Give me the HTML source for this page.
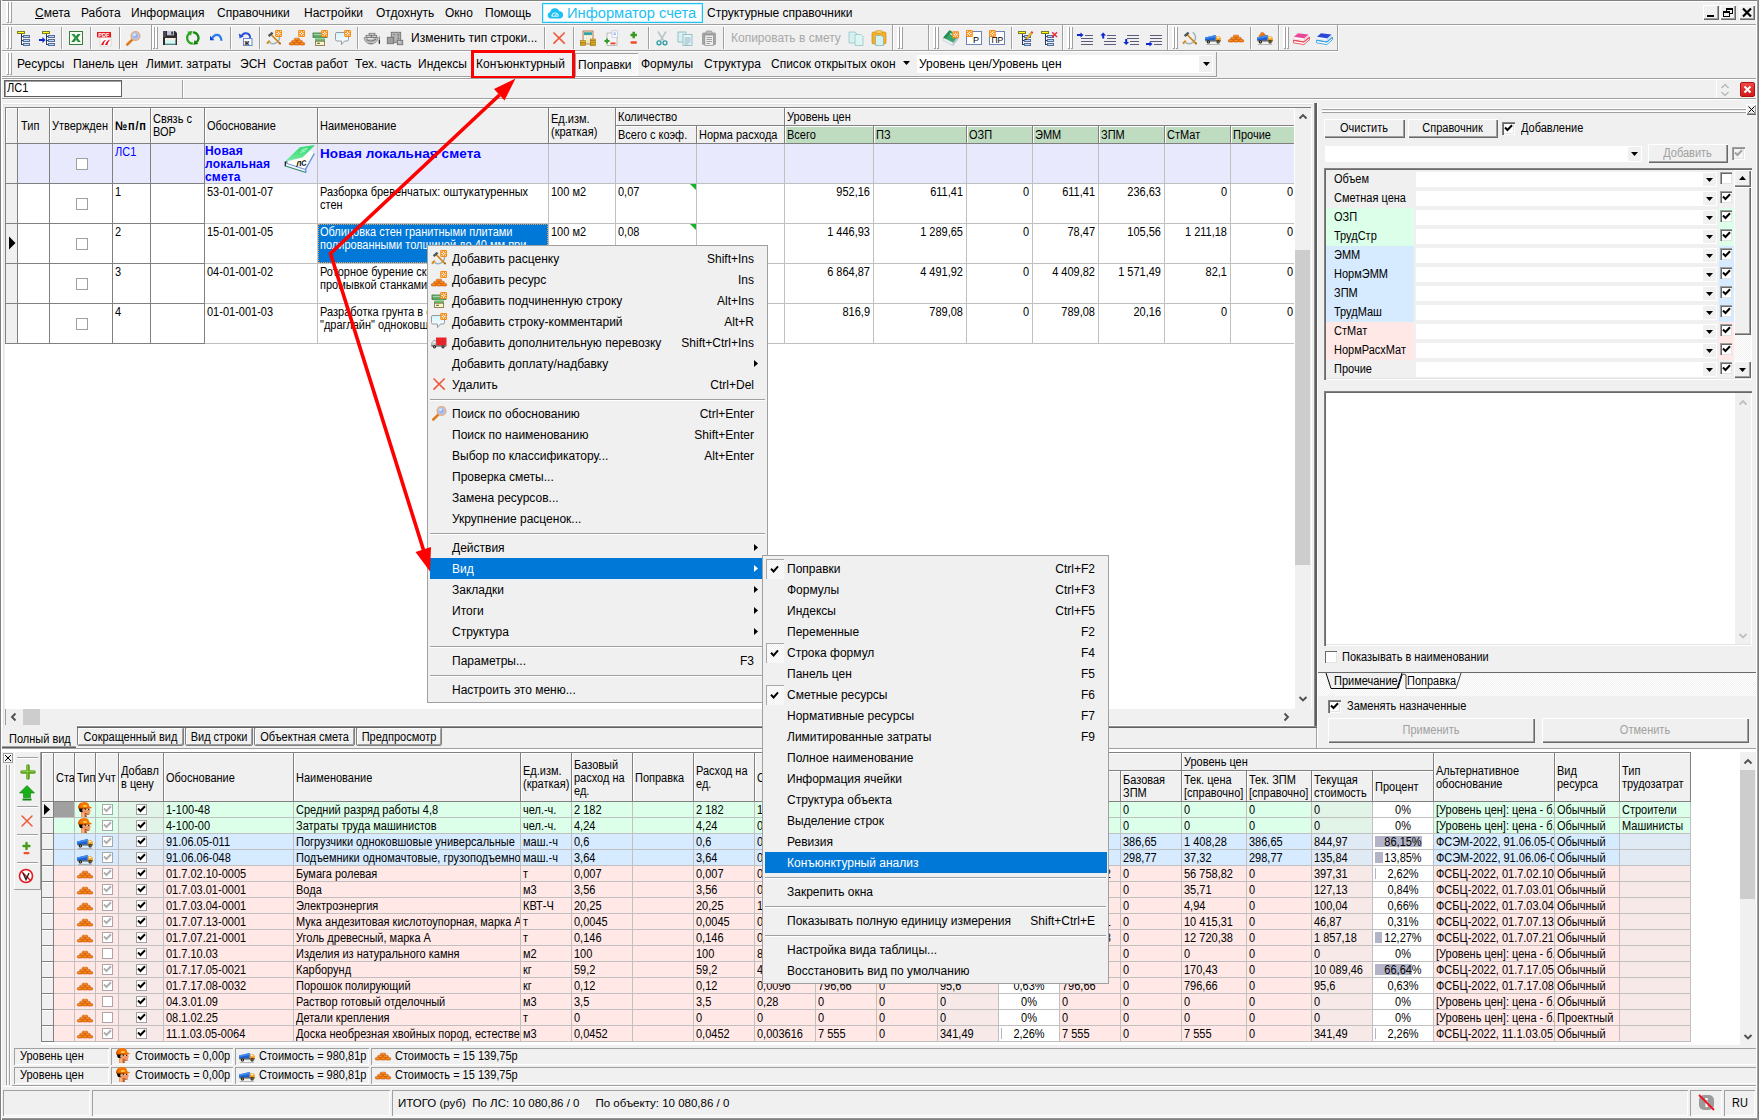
<!DOCTYPE html>
<html><head><meta charset="utf-8"><title>Smeta</title>
<style>
*{box-sizing:border-box}
html,body{margin:0;padding:0}
body{width:1759px;height:1120px;overflow:hidden;background:#f0f0f0;font-family:"Liberation Sans",sans-serif;position:relative;color:#000}
#r div,#r span,#r svg{position:absolute}
#r svg{overflow:visible}
#r{position:absolute;left:0;top:0;width:1759px;height:1120px;overflow:hidden}
.t{font-size:11px;line-height:13px;white-space:nowrap;transform:scaleY(1.11);transform-origin:0 79%}
.nt{transform:none}
.tw{font-size:11px;line-height:13px;white-space:normal}
.m{font-size:12px;line-height:15px;white-space:nowrap}
.g{color:#a0a0a0}
.b{font-weight:bold}
.bl{color:#0000ff}
.w{color:#fff}
.rs{box-shadow:inset 1px 1px 0 #fff,inset -1px -1px 0 #696969,inset -2px -2px 0 #a0a0a0;background:#f0f0f0}
.sk{box-shadow:inset 1px 1px 0 #a0a0a0,inset -1px -1px 0 #fff}
.sk2{box-shadow:inset 1px 1px 0 #828282,inset 2px 2px 0 #696969,inset -1px -1px 0 #fff,inset -2px -2px 0 #e3e3e3}
.cb{width:13px;height:13px;background:#fff;box-shadow:inset 1px 1px 0 #828282,inset 2px 2px 0 #696969,inset -1px -1px 0 #fff,inset -2px -2px 0 #e3e3e3}
.cg{width:12px;height:12px;background:#fff;border:1px solid #a0a0a0}
.hat{background-image:repeating-conic-gradient(#fff 0 25%,#f0f0f0 0 50%);background-size:2px 2px}
</style></head><body><div id="r">
<svg width="0" height="0" style="left:0;top:0"><defs><g id="tree"><g shape-rendering="crispEdges"><rect x="1" y="1" width="8" height="3" fill="#7c7c2a"/><rect x="2" y="2" width="6" height="1" fill="#ffff00"/><rect x="5" y="4" width="1" height="11" fill="#283a64"/><rect x="6" y="6" width="1" height="1" fill="#283a64"/><rect x="6" y="10" width="1" height="1" fill="#283a64"/><rect x="6" y="14" width="1" height="1" fill="#283a64"/><g fill="#5a6c9c"><rect x="7" y="5" width="7" height="3"/><rect x="7" y="9" width="7" height="3"/><rect x="7" y="13" width="7" height="3"/></g><g fill="#b4dcff"><rect x="8" y="6" width="5" height="1"/><rect x="8" y="10" width="5" height="1"/><rect x="8" y="14" width="5" height="1"/></g></g></g><g id="tree2"><g transform="translate(2,0)"><g shape-rendering="crispEdges"><rect x="1" y="1" width="8" height="3" fill="#7c7c2a"/><rect x="2" y="2" width="6" height="1" fill="#ffff00"/><rect x="5" y="4" width="1" height="11" fill="#283a64"/><rect x="6" y="6" width="1" height="1" fill="#283a64"/><rect x="6" y="10" width="1" height="1" fill="#283a64"/><rect x="6" y="14" width="1" height="1" fill="#283a64"/><g fill="#5a6c9c"><rect x="7" y="5" width="7" height="3"/><rect x="7" y="9" width="7" height="3"/><rect x="7" y="13" width="7" height="3"/></g><g fill="#b4dcff"><rect x="8" y="6" width="5" height="1"/><rect x="8" y="10" width="5" height="1"/><rect x="8" y="14" width="5" height="1"/></g></g></g><path d="M0 9h3.500V7L6.500 10 3.500 13v-2H0z" fill="#0a28d0"/></g><g id="excel"><rect x="1.500" y="1.500" width="13" height="13" fill="#f6fbf4" stroke="#3a7a3a" stroke-width="1"/><path d="M3.300 4h3L8 6.300 9.700 4h3L9.600 8l3.100 4h-3L8 9.700 6.300 12h-3L6.400 8z" fill="#1e8a34"/><path d="M4.500 4.600l5.500 6.800" stroke="#7ad08a" stroke-width=".6"/></g><g id="pdf"><path d="M3 4h11v12H3z" fill="#fff" stroke="#bbb" stroke-width=".5"/><rect x="0" y="2" width="14" height="5.4" fill="#e8161e"/><text x="1.2" y="6.8" font-size="5.6" font-weight="bold" fill="#fff" font-family="Liberation Sans">PDF</text><path d="M4 15c1-3 3-5 5-5-1.5 1.5-2.2 3-2.5 5zM8 15c1-3 3-5.5 5.5-5.5-1.8 1.5-2.6 3.4-3 5.5z" fill="#e8161e"/></g><g id="mag"><path d="M7.600 9.400L2.300 14.500" stroke="#e07a20" stroke-width="2.600" stroke-linecap="round"/><circle cx="10.500" cy="6" r="4.400" fill="#b4c8f0" stroke="#e8a878" stroke-width="1.300"/><circle cx="10.500" cy="6" r="2.500" fill="#9cb4e8"/><circle cx="9.500" cy="4.800" r="1.300" fill="#e4ecff"/></g><g id="save"><path d="M1 1h12l2 2v12H1z" fill="#2c2c2c"/><path d="M1 1h3v6H1z" fill="#4a4a4a"/><rect x="5" y="1" width="7" height="4.300" fill="#c4c4e0"/><rect x="9.300" y="1.600" width="1.800" height="3" fill="#3a3a3a"/><rect x="3" y="8" width="10.500" height="6.300" fill="#d8f4f0"/><rect x="3" y="8" width="10.500" height="1.600" fill="#ffeedd"/><rect x="3" y="13.500" width="10.500" height=".8" fill="#5ababa"/></g><g id="refresh"><path d="M7.800 13.500A5.600 5.600 0 0 1 4.200 3.600" fill="none" stroke="#2aa41c" stroke-width="2.300"/><path d="M7.300 1L5.900 5.800 2.300 1.700z" fill="#2aa41c"/><path d="M7.800 2.300A5.600 5.600 0 0 1 11.400 12.200" fill="none" stroke="#168a12" stroke-width="2.300"/><path d="M8.300 14.800L9.700 10 13.300 14.100z" fill="#0c7a0c"/></g><g id="undo"><path d="M4.300 8.200C6.300 4 11 3.600 12.700 7.500L13.600 10.800" fill="none" stroke="#2a7cf4" stroke-width="2.200"/><path d="M2 5.800V10.300H6.400z" fill="#0a44d8"/></g><g id="redo"><path d="M3.5 6.5C5 2.5 10 2 12 6v3" fill="none" stroke="#2a50d8" stroke-width="1.8"/><path d="M.8 3.6l.8 5 4.2-2.4z" fill="#2a50d8"/><rect x="5.5" y="8.5" width="8.5" height="7" fill="#fff" stroke="#6a84d0"/><text x="6.6" y="14.6" font-size="6.5" font-weight="bold" fill="#000" font-family="Liberation Sans">ж</text></g><g id="hammerb"><path d="M3.800 12.600A6.200 6.200 0 0 0 10.800 2.300" fill="none" stroke="#9ab4b8" stroke-width="1.500"/><path d="M.9 13.600L3.800 10.800" stroke="#d08418" stroke-width="1.900"/><path d="M5 4.500L13.800 13.300" stroke="#d08418" stroke-width="1.700"/><path d="M2.600 6.200L6.600 2.600" stroke="#4a5858" stroke-width="2.400"/><circle cx="14" cy="13.500" r="1" fill="#a05a10"/><rect x="9.200" y="0" width="6.800" height="7" rx="1.200" fill="#f58a10"/><path d="M12.6 .7l.75 2.050 2.050 .75-2.050 .75-.75 2.050-.75-2.050-2.050-.75 2.050-.75z" fill="#fff"/><g fill="#fff"><rect x="10.3" y="1.200" width=".9" height=".9"/><rect x="14.0" y="1.200" width=".9" height=".9"/><rect x="10.3" y="4.900" width=".9" height=".9"/><rect x="14.0" y="4.900" width=".9" height=".9"/></g><circle cx="12.6" cy="3.500" r=".75" fill="#f58a10"/></g><g id="hammer"><path d="M3.800 12.600A6.200 6.200 0 0 0 10.800 2.300" fill="none" stroke="#9ab4b8" stroke-width="1.500"/><path d="M.9 13.600L3.800 10.800" stroke="#d08418" stroke-width="1.900"/><path d="M5 4.500L13.800 13.300" stroke="#d08418" stroke-width="1.700"/><path d="M2.600 6.200L6.600 2.600" stroke="#4a5858" stroke-width="2.400"/><circle cx="14" cy="13.500" r="1" fill="#a05a10"/></g><g id="bricksb"><g transform="translate(0,3)"><g fill="#f57c0c" stroke="#c04c04" stroke-width=".55"><rect x="5.300" y="5.200" width="5.400" height="2.300" rx="1"/><rect x="2.600" y="7.400" width="5.400" height="2.300" rx="1"/><rect x="8" y="7.400" width="5.400" height="2.300" rx="1"/><rect x=".3" y="9.600" width="5.200" height="2.400" rx="1"/><rect x="5.400" y="9.600" width="5.200" height="2.400" rx="1"/><rect x="10.500" y="9.600" width="5.200" height="2.400" rx="1"/></g><path d="M6.300 5.900h3M3.600 8.100h3M9 8.100h3M1.300 10.300h2.800M6.400 10.300h2.800M11.500 10.300h2.800" stroke="#ffa848" stroke-width=".6"/></g><rect x="9.200" y="0" width="6.800" height="7" rx="1.200" fill="#f58a10"/><path d="M12.6 .7l.75 2.050 2.050 .75-2.050 .75-.75 2.050-.75-2.050-2.050-.75 2.050-.75z" fill="#fff"/><g fill="#fff"><rect x="10.3" y="1.200" width=".9" height=".9"/><rect x="14.0" y="1.200" width=".9" height=".9"/><rect x="10.3" y="4.900" width=".9" height=".9"/><rect x="14.0" y="4.900" width=".9" height=".9"/></g><circle cx="12.6" cy="3.500" r=".75" fill="#f58a10"/></g><g id="bricks"><g fill="#f57c0c" stroke="#c04c04" stroke-width=".55"><rect x="5.300" y="5.200" width="5.400" height="2.300" rx="1"/><rect x="2.600" y="7.400" width="5.400" height="2.300" rx="1"/><rect x="8" y="7.400" width="5.400" height="2.300" rx="1"/><rect x=".3" y="9.600" width="5.200" height="2.400" rx="1"/><rect x="5.400" y="9.600" width="5.200" height="2.400" rx="1"/><rect x="10.500" y="9.600" width="5.200" height="2.400" rx="1"/></g><path d="M6.300 5.900h3M3.600 8.100h3M9 8.100h3M1.300 10.300h2.800M6.400 10.300h2.800M11.500 10.300h2.800" stroke="#ffa848" stroke-width=".6"/></g><g id="boxb"><rect x="1" y="3" width="14" height="4.500" fill="#5fa462" stroke="#3c7c40" stroke-width=".8"/><rect x="1.800" y="3.800" width="12.400" height="1.400" fill="#a4d0a4"/><rect x="3" y="7.500" width="10" height="3.700" fill="#6cb46e"/><rect x="3" y="8" width="10" height="1.200" fill="#9cd09c"/><rect x="3.400" y="11.200" width="9.200" height="4.300" fill="#fbf4cc" stroke="#7a6a36" stroke-width=".8"/><rect x="5" y="12.800" width="3" height="1" rx=".5" fill="#245c24"/><rect x="9.200" y="0" width="6.800" height="7" rx="1.200" fill="#f58a10"/><path d="M12.6 .7l.75 2.050 2.050 .75-2.050 .75-.75 2.050-.75-2.050-2.050-.75 2.050-.75z" fill="#fff"/><g fill="#fff"><rect x="10.3" y="1.200" width=".9" height=".9"/><rect x="14.0" y="1.200" width=".9" height=".9"/><rect x="10.3" y="4.900" width=".9" height=".9"/><rect x="14.0" y="4.900" width=".9" height=".9"/></g><circle cx="12.6" cy="3.500" r=".75" fill="#f58a10"/></g><g id="speechb"><defs><linearGradient id="sg" x1="0" y1="0" x2="0" y2="1"><stop offset="0" stop-color="#d4f4ff"/><stop offset="1" stop-color="#fff"/></linearGradient></defs><path d="M2 2.500h10a1.500 1.500 0 0 1 1.500 1.500v5.500a1.500 1.500 0 0 1-1.500 1.500H9.500l-3 3.500V11H2A1.500 1.500 0 0 1 .5 9.500V4A1.500 1.500 0 0 1 2 2.500z" fill="url(#sg)" stroke="#8c9096" stroke-width=".9"/><rect x="9.200" y="0" width="6.800" height="7" rx="1.200" fill="#f58a10"/><path d="M12.6 .7l.75 2.050 2.050 .75-2.050 .75-.75 2.050-.75-2.050-2.050-.75 2.050-.75z" fill="#fff"/><g fill="#fff"><rect x="10.3" y="1.200" width=".9" height=".9"/><rect x="14.0" y="1.200" width=".9" height=".9"/><rect x="10.3" y="4.900" width=".9" height=".9"/><rect x="14.0" y="4.900" width=".9" height=".9"/></g><circle cx="12.6" cy="3.500" r=".75" fill="#f58a10"/></g><g id="gray1"><path d="M1.100 7.600h13.900c0 3.600-3 6.200-7 6.200s-6.900-2.600-6.900-6.200z" fill="#c2c2c2" stroke="#808080" stroke-width=".7"/><path d="M3.500 9.500c2 2 7 2 9.500-.5" fill="none" stroke="#7c7c7c" stroke-width="1.100"/><path d="M5 8.300h5" stroke="#f4f4f4" stroke-width="1"/><g fill="#b8b8b8" stroke="#727272" stroke-width=".8"><rect x="6.100" y="3.300" width="5.800" height="2"/><rect x="3.100" y="5.300" width="5.300" height="2.200"/><rect x="8.400" y="5.300" width="5.300" height="2.200"/></g><path d="M7.200 4.300h3.500M4.200 6.400h3M9.500 6.400h3" stroke="#e8e8e8" stroke-width=".7"/><rect x="15.800" y="6.200" width="1.200" height="7.600" rx=".6" fill="#8a8a8a"/><rect x="15.800" y="10" width="1.200" height="3.800" rx=".6" fill="#2c2c2c"/><rect x="5.500" y="13.200" width="4.500" height="1" fill="#7c7c7c"/></g><g id="gray2"><rect x="5.300" y="2.300" width="9.400" height="10" fill="#b4b4b4" stroke="#727272" stroke-width=".9"/><path d="M7.200 4.600h2M11 4.600h2.500M12.300 4.600v4M11 8.800h2.600" stroke="#7a7a7a" stroke-width=".8"/><rect x="1.300" y="7.300" width="6.400" height="6.400" fill="#b0b0b0" stroke="#6e6e6e" stroke-width=".9"/><path d="M2.800 8v5M4.500 8v5M6.200 8v5" stroke="#8a8a8a" stroke-width=".8"/><rect x="11.300" y="10.300" width="5.400" height="4.400" fill="#b8b8b8" stroke="#6e6e6e" stroke-width=".9"/><rect x="12.200" y="11.200" width="1.200" height=".9" fill="#fff"/></g><g id="redx"><path d="M3 3l10.200 10.200M13.200 3L3 13.200" stroke="#f05a3c" stroke-width="1.700" stroke-linecap="round"/></g><g id="calc"><rect x="3" y="1" width="10" height="13" fill="#f0e4c0" stroke="#a86a4a" stroke-width=".8"/><rect x="4" y="2.300" width="8" height="2.600" fill="#28a0a8"/><g fill="#fff"><rect x="4.300" y="6" width="1.800" height="1.500"/><rect x="7" y="6" width="1.800" height="1.500"/><rect x="9.700" y="6" width="1.800" height="1.500"/><rect x="4.300" y="8.500" width="1.800" height="1.500"/><rect x="7" y="8.500" width="1.800" height="1.500"/><rect x="9.700" y="8.500" width="1.800" height="1.500"/></g><g fill="#e8b820" stroke="#8a6a10" stroke-width=".5"><rect x=".5" y="10.500" width="5" height="1.800"/><rect x=".5" y="12.300" width="5" height="1.800"/><rect x=".5" y="14" width="5" height="1.700"/><rect x="10.500" y="9" width="5" height="1.800"/><rect x="10.500" y="10.800" width="5" height="1.800"/><rect x="10.500" y="12.500" width="5" height="1.800"/><rect x="10.500" y="14.200" width="5" height="1.600"/></g></g><g id="docpm"><path d="M4 3h7l3 3v9.500H4z" fill="#f4f4f4" stroke="#b0b0b0" stroke-width=".8"/><rect x="9" y=".8" width="5.500" height="6.500" fill="#f8fbff" stroke="#b8c4d8" stroke-width=".7"/><path d="M10.500 3h2.500M10.500 4.500h2.500" stroke="#6a90e0" stroke-width=".7"/><path d="M1.500 11h5M4 8.500v5" stroke="#2e9a2e" stroke-width="1.800"/><rect x="7.500" y="12.500" width="5" height="1.800" fill="#e8402a"/></g><g id="plusminus"><path d="M5.500 5h6.400M8.700 1.800v6.400" stroke="#3a9a1e" stroke-width="2.500"/><rect x="5.500" y="11.300" width="6.400" height="2.400" rx="1" fill="#ee4a2a"/></g><g id="scis"><path d="M4 1.500l5.500 9M12 1.500L6.500 10.500" stroke="#b8c4c8" stroke-width="1.500"/><circle cx="5" cy="12.800" r="2" fill="none" stroke="#2a98a0" stroke-width="1.300"/><circle cx="11" cy="12.800" r="2" fill="none" stroke="#2a98a0" stroke-width="1.300"/></g><g id="copyg"><rect x="1" y="2" width="8" height="10" fill="#d8f0f4" stroke="#8ab4bc" stroke-width=".8"/><rect x="6" y="4.500" width="9" height="11" fill="#e2f6f8" stroke="#8ab4bc" stroke-width=".8"/><path d="M7.500 8h6M7.500 10h6M7.500 12h6M7.500 14h4" stroke="#7aa4ac" stroke-width=".8"/></g><g id="pasteg"><rect x="1" y="2.500" width="14" height="12.500" rx="1.500" fill="#a4a4a4"/><rect x="5" y="1" width="6" height="3" rx="1" fill="#bcbcbc" stroke="#8a8a8a" stroke-width=".6"/><rect x="3.800" y="5" width="8.800" height="10.500" fill="#ececec" stroke="#8a8a8a" stroke-width=".7"/><path d="M5.500 7.500h5.500M5.500 9.500h5.500M5.500 11.500h5.500M5.500 13.500h3.500" stroke="#8a8a8a" stroke-width=".8"/></g><g id="copy2"><path d="M1 2h6l2 2v9H1z" fill="#d4f0f0" stroke="#98c4c8" stroke-width=".8"/><path d="M7 4.500h6l2 2v9H7z" fill="#dcf4f4" stroke="#98c4c8" stroke-width=".8"/></g><g id="paste2"><rect x="1" y="2" width="14" height="12" rx="1.500" fill="#f4b028" stroke="#d08a10" stroke-width=".7"/><rect x="5" y=".6" width="6" height="2.800" rx="1" fill="#f8d060" stroke="#c08010" stroke-width=".5"/><path d="M4.500 5.500h6l2 2v8h-8z" fill="#d4f0f0" stroke="#88b4b8" stroke-width=".8"/></g><g id="gbook"><path d="M.3 7.500L10 12.500V15.700L.3 10.300z" fill="#eef1f4" stroke="#aab4c0" stroke-width=".5"/><path d="M10 12.500L15.700 5.800V8.800L10 15.700z" fill="#b8c2d0"/><path d="M6.500 .3L15.700 5.800 10 12.500 .3 7.500z" fill="#3aa86c"/><path d="M6.500 .3L9 1.800 2.800 8.800 .3 7.500z" fill="#2c8c58"/><path d="M7 3.500l3 1.700" stroke="#d8f4e4" stroke-width="1.100"/><g transform="translate(0,1.200)"><rect x="9.200" y="0" width="6.800" height="7" rx="1.200" fill="#f58a10"/><path d="M12.6 .7l.75 2.050 2.050 .75-2.050 .75-.75 2.050-.75-2.050-2.050-.75 2.050-.75z" fill="#fff"/><g fill="#fff"><rect x="10.3" y="1.200" width=".9" height=".9"/><rect x="14.0" y="1.200" width=".9" height=".9"/><rect x="10.3" y="4.900" width=".9" height=".9"/><rect x="14.0" y="4.900" width=".9" height=".9"/></g><circle cx="12.6" cy="3.500" r=".75" fill="#f58a10"/></g></g><g id="picon"><rect x=".5" y="1.500" width="15" height="13" fill="#fff" stroke="#6a84b8" stroke-width="1"/><text x="7" y="13" font-size="9" fill="#000" font-family="Liberation Sans">Р</text><rect x="0" y="0" width="6.800" height="7" rx="1.200" fill="#f58a10"/><path d="M3.4 .7l.75 2.050 2.050 .75-2.050 .75-.75 2.050-.75-2.050-2.050-.75 2.050-.75z" fill="#fff"/><g fill="#fff"><rect x="1.1" y="1.200" width=".9" height=".9"/><rect x="4.8" y="1.200" width=".9" height=".9"/><rect x="1.1" y="4.900" width=".9" height=".9"/><rect x="4.8" y="4.900" width=".9" height=".9"/></g><circle cx="3.4" cy="3.500" r=".75" fill="#f58a10"/></g><g id="pricon"><rect x=".5" y="1.500" width="15" height="13" fill="#fff" stroke="#6a84b8" stroke-width="1"/><text x="2.600" y="13" font-size="8.500" fill="#000" font-family="Liberation Sans" letter-spacing="-.3">ПР</text><rect x="0" y="0" width="6.800" height="7" rx="1.200" fill="#f58a10"/><path d="M3.4 .7l.75 2.050 2.050 .75-2.050 .75-.75 2.050-.75-2.050-2.050-.75 2.050-.75z" fill="#fff"/><g fill="#fff"><rect x="1.1" y="1.200" width=".9" height=".9"/><rect x="4.8" y="1.200" width=".9" height=".9"/><rect x="1.1" y="4.900" width=".9" height=".9"/><rect x="4.8" y="4.900" width=".9" height=".9"/></g><circle cx="3.4" cy="3.500" r=".75" fill="#f58a10"/></g><g id="treeed"><g shape-rendering="crispEdges"><rect x="1" y="1" width="8" height="3" fill="#7c7c2a"/><rect x="2" y="2" width="6" height="1" fill="#ffff00"/><rect x="5" y="4" width="1" height="11" fill="#283a64"/><rect x="6" y="6" width="1" height="1" fill="#283a64"/><rect x="6" y="10" width="1" height="1" fill="#283a64"/><rect x="6" y="14" width="1" height="1" fill="#283a64"/><g fill="#5a6c9c"><rect x="7" y="5" width="7" height="3"/><rect x="7" y="9" width="7" height="3"/><rect x="7" y="13" width="7" height="3"/></g><g fill="#b4dcff"><rect x="8" y="6" width="5" height="1"/><rect x="8" y="10" width="5" height="1"/><rect x="8" y="14" width="5" height="1"/></g></g><path d="M8.800 8.200L13.800 2.300 15.300 3.600 10.300 9.500z" fill="#f4c428" stroke="#9a7418" stroke-width=".5"/><path d="M13.800 2.300l1-1.200 1.500 1.300-1 1.200z" fill="#e82a2a"/><path d="M8.800 8.200L8 10.200 10.300 9.500z" fill="#1a1a1a"/></g><g id="treedel"><g shape-rendering="crispEdges"><rect x="1" y="1" width="8" height="3" fill="#7c7c2a"/><rect x="2" y="2" width="6" height="1" fill="#ffff00"/><rect x="5" y="4" width="1" height="11" fill="#283a64"/><rect x="6" y="6" width="1" height="1" fill="#283a64"/><rect x="6" y="10" width="1" height="1" fill="#283a64"/><rect x="6" y="14" width="1" height="1" fill="#283a64"/><g fill="#5a6c9c"><rect x="7" y="5" width="7" height="3"/><rect x="7" y="9" width="7" height="3"/><rect x="7" y="13" width="7" height="3"/></g><g fill="#b4dcff"><rect x="8" y="6" width="5" height="1"/><rect x="8" y="10" width="5" height="1"/><rect x="8" y="14" width="5" height="1"/></g></g><path d="M12.200 2.200l4.800 4.800M17 2.200l-4.800 4.800" stroke="#ee2030" stroke-width="1.300"/></g><g id="ind1"><path d="M7.500 5.500H16M4 8.500H16M4 11.500H16M4 14.500H16" stroke="#5c5c7a" stroke-width="1" shape-rendering="crispEdges" fill="none"/><path d="M0 4h3.500V2.400L6.500 5 3.500 7.600V6H0z" fill="#0a28d0"/></g><g id="ind2"><path d="M7 5.500H16M7 8.500H16M3.500 11.500H16M3.500 14.500H16" stroke="#5c5c7a" stroke-width="1" shape-rendering="crispEdges" fill="none"/><path d="M2.200 8.500V5.500H.3L3.200 2.600 6.100 5.500H4.200V8.500z" fill="#0a28d0"/></g><g id="ind3"><path d="M4 5.500H16M4 8.500H16M7 11.500H16M7 14.500H16" stroke="#5c5c7a" stroke-width="1" shape-rendering="crispEdges" fill="none"/><path d="M2.200 9V12H.3l2.900 2.900 2.900-2.900H4.200V9z" fill="#0a28d0"/></g><g id="ind4"><path d="M4 5.500H16M4 8.500H16M4 11.500H16M7.500 14.500H16" stroke="#5c5c7a" stroke-width="1" shape-rendering="crispEdges" fill="none"/><path d="M0 13h3.500v-1.600L6.500 14 3.500 16.600V15H0z" fill="#0a28d0"/></g><g id="truck"><path d="M0 7.400L10.800 5.100V10.500H0z" fill="#1c62d0"/><path d="M0 7.400L10.800 5.100v1.800L0 9z" fill="#3f8cf4"/><path d="M10.800 6H14l1.800 2v3h-5z" fill="#f29c1c"/><path d="M11.800 6.600h1.800l1.200 1.600h-3z" fill="#fff6e0"/><rect x=".5" y="10.500" width="15.300" height=".9" fill="#2a2a2a"/><circle cx="3.400" cy="11.900" r="1.600" fill="#151515"/><circle cx="13.100" cy="11.900" r="1.600" fill="#151515"/><circle cx="3.400" cy="11.900" r=".65" fill="#f0d840"/><circle cx="13.100" cy="11.900" r=".65" fill="#f0d840"/><rect x="1" y="14" width="14" height=".7" fill="#a0a0a0"/></g><g id="truck2"><g fill="#f57c14" stroke="#c4560c" stroke-width=".4"><rect x="2" y="4.800" width="3.200" height="2.200" rx=".9"/><rect x="5.200" y="4" width="3.200" height="2.200" rx=".9"/><rect x="3.600" y="2.600" width="3.200" height="2.200" rx=".9"/></g><path d="M0 7.400L10.800 5.100V10.500H0z" fill="#1c62d0"/><path d="M0 7.400L10.800 5.100v1.800L0 9z" fill="#3f8cf4"/><path d="M10.800 6H14l1.800 2v3h-5z" fill="#f29c1c"/><path d="M11.800 6.600h1.800l1.200 1.600h-3z" fill="#fff6e0"/><rect x=".5" y="10.500" width="15.300" height=".9" fill="#2a2a2a"/><circle cx="3.400" cy="11.900" r="1.600" fill="#151515"/><circle cx="13.100" cy="11.900" r="1.600" fill="#151515"/><circle cx="3.400" cy="11.900" r=".65" fill="#f0d840"/><circle cx="13.100" cy="11.900" r=".65" fill="#f0d840"/><rect x="1" y="14" width="14" height=".7" fill="#a0a0a0"/></g><g id="pbook"><path d="M.5 10.200L10.800 12 16.500 7.300V9.700L10.800 14.600 .5 12.800z" fill="#fff" stroke="#e84a52" stroke-width=".9"/><path d="M.5 10.200L10.800 12 16.500 7.300" fill="none" stroke="#e84a52" stroke-width="1.100"/><path d="M1 6.800L11 8.300V10.300L1 8.800z" fill="#fff" stroke="#f4c4d8" stroke-width=".5"/><path d="M11 8.300L15.500 4.500V6.500L11 10.300z" fill="#f4c4d8"/><path d="M5 3.200L15.500 4.500 11 8.300 1 6.800z" fill="#e8489a"/></g><g id="bbook"><path d="M.5 10.200L10.800 12 16.500 7.300V9.700L10.800 14.600 .5 12.800z" fill="#fff" stroke="#38a0e8" stroke-width=".9"/><path d="M.5 10.200L10.800 12 16.500 7.300" fill="none" stroke="#38a0e8" stroke-width="1.100"/><path d="M1 6.800L11 8.300V10.300L1 8.800z" fill="#fff" stroke="#c4d4f4" stroke-width=".5"/><path d="M11 8.300L15.500 4.500V6.500L11 10.300z" fill="#c4d4f4"/><path d="M5 3.200L15.500 4.500 11 8.300 1 6.800z" fill="#2a48d8"/></g><g id="worker"><path d="M4 9.500L4.200 15H9.800L9.500 11z" fill="#e48c58"/><path d="M5 11L5.200 15H7L6.800 11z" fill="#ffb878"/><path d="M8.300 11.500L9.800 15H8.600z" fill="#6a3420"/><path d="M5.900 5.900H13L13.200 7.800 13.900 8.500 13.200 9.200V10.500L12.700 12.800H9.500L7.500 11.500 5.900 10z" fill="#f09868"/><path d="M8.200 10.800L12.700 12.800H9.500L7.500 11.500z" fill="#a85838"/><rect x="9.200" y="6.200" width="1.600" height="1.800" fill="#ffd8a0"/><path d="M2 5.700H6V7L5.200 8 5.900 10H3.300C2.300 9 1.900 7.500 2 5.700z" fill="#0a0604"/><path d="M7 5.900h2.200v1.500l-1.200.300z" fill="#1a0c08"/><circle cx="11.500" cy="7.500" r=".6" fill="#000"/><path d="M1 5.900C1 3.500 3 0 7.500 0S12 3.500 12.300 4.200L15 5.600 14.600 6.200H1z" fill="#f87400"/><path d="M1 5.900C1 3.500 2.500 1.300 4.500 .5 3.300 2 2.800 4 2.800 5.900z" fill="#d86000"/><rect x="6.100" y="3" width="3.800" height="2" rx=".5" fill="#ffc83a"/><path d="M1 5.700H12v.7H1.200z" fill="#a84800"/></g><g id="truckr"><rect x="5" y="3.500" width="10.500" height="8" fill="#e8242a"/><path d="M5 6.500H2.500L.5 9v3H5z" fill="#c8c8c8" stroke="#888" stroke-width=".5"/><path d="M1.500 9L3 7.300h1.500V9z" fill="#e8f0ff"/><rect x=".5" y="11.500" width="15" height="1" fill="#444"/><circle cx="3.500" cy="12.800" r="1.600" fill="#222"/><circle cx="12" cy="12.800" r="1.600" fill="#222"/><circle cx="3.500" cy="12.800" r=".6" fill="#ccc"/><circle cx="12" cy="12.800" r=".6" fill="#ccc"/></g><g id="cloud"><path d="M3.800 13.500a3.300 3.300 0 0 1-.5-6.500 4.700 4.700 0 0 1 9-.8 3.600 3.600 0 0 1 .2 7.300z" fill="#1cc0f4"/><path d="M4.800 11.200a3.300 3.300 0 0 1 6.600 0z" fill="none" stroke="#fff" stroke-width=".9"/><path d="M8.100 11l1.400-2" stroke="#fff" stroke-width=".8"/></g><g id="gplus"><path d="M2 8h12M8 2v12" stroke="#5aa020" stroke-width="3.600" stroke-linecap="round"/><path d="M2 7.300h12M7.300 2v12" stroke="#8ac840" stroke-width="1.200" stroke-linecap="round"/></g><g id="gup"><path d="M8 .5l7.500 7.500H11.500v4.500h-7V8H.5z" fill="#18b018" stroke="#0a7a0a" stroke-width=".6"/><rect x="3.500" y="13.500" width="9" height="2" fill="#0a8a0a"/></g><g id="vred"><circle cx="8" cy="8" r="6.500" fill="#fff" stroke="#e8161e" stroke-width="1.600"/><path d="M3.500 3.500l9 9" stroke="#e8161e" stroke-width="1.400"/><path d="M5 5l3 6.500L11 5" fill="none" stroke="#222" stroke-width="1.400"/></g><g id="lsbook"><defs><linearGradient id="lg1" x1="0" y1="0" x2="0" y2="1"><stop offset="0" stop-color="#28d868"/><stop offset="1" stop-color="#78eca8"/></linearGradient></defs><path d="M1.400 18.500L18.400 13.500 26.500 7 30.300 9.500 21.500 25.500z" fill="#fffff8"/><path d="M15.900 3.200L31.100 .9 18.400 13.500 .9 17.600z" fill="url(#lg1)"/><path d="M18 5.500l6-1.500M17 7l6-1.500M16 8.500l5-1.200" stroke="#b8f4d0" stroke-width=".8"/><path d="M1.400 18.800L21.500 25.500l.5 3L1.400 22z" fill="#f8f8ff"/><path d="M1.400 19L21.500 25.500" stroke="#7a9ae0" stroke-width="1.300" fill="none"/><path d="M1.400 22L22 28.500" stroke="#2a8a6a" stroke-width="1.100" fill="none"/><path d="M30.300 9.500L21.500 25.500l.5 3" stroke="#6a94e0" stroke-width="1.500" fill="none"/><path d="M3.500 18H1.300v4.200" stroke="#0a1a0a" stroke-width="1.200" fill="none"/><text x="12" y="22" font-size="7.500" font-style="italic" font-weight="bold" fill="#000" font-family="Liberation Sans" transform="rotate(-8 18 19)">ЛС</text></g><g id="nosnd"><rect x="1" y="1" width="15" height="15" rx="5" fill="#9c9c9c"/><rect x="7.500" y="7.500" width="2.200" height="5.500" fill="#fff"/><rect x="7.500" y="4" width="2.200" height="2.200" fill="#fff"/><path d="M1 1l15 15" stroke="#f01020" stroke-width="1.800"/></g></defs></svg>
<div style="left:2px;top:103px;width:1311px;height:1px;background:#fff"></div>
<div style="left:3px;top:104px;width:1310px;height:1px;background:#e3e3e3"></div>
<div style="left:2px;top:103px;width:1px;height:644px;background:#fff"></div>
<div style="left:3px;top:104px;width:1px;height:643px;background:#e3e3e3"></div>
<div style="left:5px;top:107px;width:1290px;height:602px;background:#fff"></div>
<div style="left:5px;top:107px;width:1289px;height:37px;background:#808080"></div>
<div style="left:5px;top:107px;width:1306px;height:1px;background:#808080"></div>
<div style="left:6px;top:108px;width:11px;height:35px;background:#f0f0f0;box-shadow:inset 1px 1px 0 #fff"></div>
<div style="left:18px;top:108px;width:31px;height:35px;background:#f0f0f0;box-shadow:inset 1px 1px 0 #fff"></div>
<div style="left:50px;top:108px;width:62px;height:35px;background:#f0f0f0;box-shadow:inset 1px 1px 0 #fff"></div>
<div style="left:113px;top:108px;width:37px;height:35px;background:#f0f0f0;box-shadow:inset 1px 1px 0 #fff"></div>
<div style="left:151px;top:108px;width:53px;height:35px;background:#f0f0f0;box-shadow:inset 1px 1px 0 #fff"></div>
<div style="left:205px;top:108px;width:112px;height:35px;background:#f0f0f0;box-shadow:inset 1px 1px 0 #fff"></div>
<div style="left:318px;top:108px;width:230px;height:35px;background:#f0f0f0;box-shadow:inset 1px 1px 0 #fff"></div>
<div style="left:549px;top:108px;width:66px;height:35px;background:#f0f0f0;box-shadow:inset 1px 1px 0 #fff"></div>
<div style="left:616px;top:108px;width:168px;height:17px;background:#f0f0f0;box-shadow:inset 1px 1px 0 #fff"></div>
<div style="left:616px;top:126px;width:80px;height:17px;background:#f0f0f0;box-shadow:inset 1px 1px 0 #fff"></div>
<div style="left:697px;top:126px;width:87px;height:17px;background:#f0f0f0;box-shadow:inset 1px 1px 0 #fff"></div>
<div style="left:785px;top:108px;width:509px;height:17px;background:#f0f0f0;box-shadow:inset 1px 1px 0 #fff"></div>
<div style="left:785px;top:126px;width:88px;height:17px;background:#c0dcc0;box-shadow:inset 1px 1px 0 #fff"></div>
<div style="left:874px;top:126px;width:92px;height:17px;background:#c0dcc0;box-shadow:inset 1px 1px 0 #fff"></div>
<div style="left:967px;top:126px;width:65px;height:17px;background:#c0dcc0;box-shadow:inset 1px 1px 0 #fff"></div>
<div style="left:1033px;top:126px;width:65px;height:17px;background:#c0dcc0;box-shadow:inset 1px 1px 0 #fff"></div>
<div style="left:1099px;top:126px;width:65px;height:17px;background:#c0dcc0;box-shadow:inset 1px 1px 0 #fff"></div>
<div style="left:1165px;top:126px;width:65px;height:17px;background:#c0dcc0;box-shadow:inset 1px 1px 0 #fff"></div>
<div style="left:1231px;top:126px;width:63px;height:17px;background:#c0dcc0;box-shadow:inset 1px 1px 0 #fff"></div>
<span class="t" style="left:21px;top:120px;">Тип</span>
<span class="t" style="left:52px;top:120px;">Утвержден</span>
<span class="t b" style="left:115px;top:120px;letter-spacing:.8px">№п/п</span>
<span class="t" style="left:153px;top:113px;">Связь с</span>
<span class="t" style="left:153px;top:126px;">ВОР</span>
<span class="t" style="left:207px;top:120px;">Обоснование</span>
<span class="t" style="left:320px;top:120px;">Наименование</span>
<span class="t" style="left:551px;top:113px;">Ед.изм.</span>
<span class="t" style="left:551px;top:126px;">(краткая)</span>
<span class="t" style="left:618px;top:111px;">Количество</span>
<span class="t" style="left:787px;top:111px;">Уровень цен</span>
<span class="t" style="left:618px;top:129px;">Всего с коэф.</span>
<span class="t" style="left:699px;top:129px;">Норма расхода</span>
<span class="t" style="left:787px;top:129px;">Всего</span>
<span class="t" style="left:876px;top:129px;">ПЗ</span>
<span class="t" style="left:969px;top:129px;">ОЗП</span>
<span class="t" style="left:1035px;top:129px;">ЭММ</span>
<span class="t" style="left:1101px;top:129px;">ЗПМ</span>
<span class="t" style="left:1167px;top:129px;">СтМат</span>
<span class="t" style="left:1233px;top:129px;">Прочие</span>
<div style="left:18px;top:144px;width:1277px;height:39px;background:#e9e9fd"></div>
<div style="left:6px;top:144px;width:11px;height:199px;background:#f0f0f0"></div>
<div style="left:5px;top:183px;width:200px;height:1px;background:#808080"></div>
<div style="left:205px;top:183px;width:1090px;height:1px;background:#c0c0c0"></div>
<div style="left:5px;top:223px;width:200px;height:1px;background:#808080"></div>
<div style="left:205px;top:223px;width:1090px;height:1px;background:#c0c0c0"></div>
<div style="left:5px;top:263px;width:200px;height:1px;background:#808080"></div>
<div style="left:205px;top:263px;width:1090px;height:1px;background:#c0c0c0"></div>
<div style="left:5px;top:303px;width:200px;height:1px;background:#808080"></div>
<div style="left:205px;top:303px;width:1090px;height:1px;background:#c0c0c0"></div>
<div style="left:5px;top:343px;width:200px;height:1px;background:#808080"></div>
<div style="left:205px;top:343px;width:1090px;height:1px;background:#c0c0c0"></div>
<div style="left:5px;top:144px;width:1px;height:200px;background:#808080"></div>
<div style="left:17px;top:144px;width:1px;height:200px;background:#808080"></div>
<div style="left:49px;top:144px;width:1px;height:200px;background:#808080"></div>
<div style="left:112px;top:144px;width:1px;height:200px;background:#808080"></div>
<div style="left:150px;top:144px;width:1px;height:200px;background:#808080"></div>
<div style="left:204px;top:144px;width:1px;height:200px;background:#808080"></div>
<div style="left:317px;top:144px;width:1px;height:200px;background:#c0c0c0"></div>
<div style="left:548px;top:144px;width:1px;height:200px;background:#c0c0c0"></div>
<div style="left:615px;top:144px;width:1px;height:200px;background:#c0c0c0"></div>
<div style="left:696px;top:144px;width:1px;height:200px;background:#c0c0c0"></div>
<div style="left:784px;top:144px;width:1px;height:200px;background:#c0c0c0"></div>
<div style="left:873px;top:144px;width:1px;height:200px;background:#c0c0c0"></div>
<div style="left:966px;top:144px;width:1px;height:200px;background:#c0c0c0"></div>
<div style="left:1032px;top:144px;width:1px;height:200px;background:#c0c0c0"></div>
<div style="left:1098px;top:144px;width:1px;height:200px;background:#c0c0c0"></div>
<div style="left:1164px;top:144px;width:1px;height:200px;background:#c0c0c0"></div>
<div style="left:1230px;top:144px;width:1px;height:200px;background:#c0c0c0"></div>
<div class="cg" style="left:76px;top:158px;width:12px;height:12px;"></div>
<div class="cg" style="left:76px;top:198px;width:12px;height:12px;"></div>
<div class="cg" style="left:76px;top:238px;width:12px;height:12px;"></div>
<div class="cg" style="left:76px;top:278px;width:12px;height:12px;"></div>
<div class="cg" style="left:76px;top:318px;width:12px;height:12px;"></div>
<svg style="left:9px;top:236px" width="7" height="14"><path d="M0 .5l6.500 6.500-6.500 6.500z" fill="#000"/></svg>
<span class="t bl" style="left:115px;top:146px;">ЛС1</span>
<span class="t b bl nt" style="left:205px;top:145px;font-size:12px;letter-spacing:.2px">Новая</span>
<span class="t b bl nt" style="left:205px;top:158px;font-size:12px;letter-spacing:.2px">локальная</span>
<span class="t b bl nt" style="left:205px;top:171px;font-size:12px;letter-spacing:.2px">смета</span>
<svg style="left:284px;top:144px;" width="32" height="30" viewBox="0 0 32 30"><use href="#lsbook"/></svg>
<span class="t b bl nt" style="left:320px;top:145px;font-size:13.5px;line-height:17px;letter-spacing:.08px">Новая локальная смета</span>
<div style="left:318px;top:224px;width:230px;height:39px;background:#0078d7;outline:1px dotted #e0a060;outline-offset:-1px"></div>
<span class="t" style="left:115px;top:186px;">1</span>
<span class="t" style="left:207px;top:186px;">53-01-001-07</span>
<span class="t" style="left:320px;top:186px;">Разборка бревенчатых: оштукатуренных</span>
<span class="t" style="left:320px;top:199px;">стен</span>
<span class="t" style="left:551px;top:186px;">100 м2</span>
<span class="t" style="left:618px;top:186px;">0,07</span>
<svg style="left:690px;top:184px" width="6" height="6"><path d="M0 0h6v6z" fill="#14b428"/></svg>
<span class="t" style="right:889px;top:186px;">952,16</span>
<span class="t" style="right:796px;top:186px;">611,41</span>
<span class="t" style="right:730px;top:186px;">0</span>
<span class="t" style="right:664px;top:186px;">611,41</span>
<span class="t" style="right:598px;top:186px;">236,63</span>
<span class="t" style="right:532px;top:186px;">0</span>
<span class="t" style="right:466px;top:186px;">0</span>
<span class="t" style="left:115px;top:226px;">2</span>
<span class="t" style="left:207px;top:226px;">15-01-001-05</span>
<span class="t w" style="left:320px;top:226px;">Облицовка стен гранитными плитами</span>
<span class="t w" style="left:320px;top:239px;">полированными толщиной до 40 мм при</span>
<span class="t" style="left:551px;top:226px;">100 м2</span>
<span class="t" style="left:618px;top:226px;">0,08</span>
<svg style="left:690px;top:224px" width="6" height="6"><path d="M0 0h6v6z" fill="#14b428"/></svg>
<span class="t" style="right:889px;top:226px;">1 446,93</span>
<span class="t" style="right:796px;top:226px;">1 289,65</span>
<span class="t" style="right:730px;top:226px;">0</span>
<span class="t" style="right:664px;top:226px;">78,47</span>
<span class="t" style="right:598px;top:226px;">105,56</span>
<span class="t" style="right:532px;top:226px;">1 211,18</span>
<span class="t" style="right:466px;top:226px;">0</span>
<span class="t" style="left:115px;top:266px;">3</span>
<span class="t" style="left:207px;top:266px;">04-01-001-02</span>
<span class="t" style="left:320px;top:266px;width:107px;overflow:hidden">Роторное бурение скважин с прямой</span>
<span class="t" style="left:320px;top:279px;width:107px;overflow:hidden">промывкой станками с дизельным</span>
<span class="t" style="left:551px;top:266px;">100 м</span>
<span class="t" style="left:618px;top:266px;">0,1</span>
<svg style="left:690px;top:264px" width="6" height="6"><path d="M0 0h6v6z" fill="#14b428"/></svg>
<span class="t" style="right:889px;top:266px;">6 864,87</span>
<span class="t" style="right:796px;top:266px;">4 491,92</span>
<span class="t" style="right:730px;top:266px;">0</span>
<span class="t" style="right:664px;top:266px;">4 409,82</span>
<span class="t" style="right:598px;top:266px;">1 571,49</span>
<span class="t" style="right:532px;top:266px;">82,1</span>
<span class="t" style="right:466px;top:266px;">0</span>
<span class="t" style="left:115px;top:306px;">4</span>
<span class="t" style="left:207px;top:306px;">01-01-001-03</span>
<span class="t" style="left:320px;top:306px;width:107px;overflow:hidden">Разработка грунта в отвал экскаваторами</span>
<span class="t" style="left:320px;top:319px;width:107px;overflow:hidden">"драглайн" одноковшовыми</span>
<span class="t" style="left:551px;top:306px;">1000 м3</span>
<span class="t" style="left:618px;top:306px;">0,5</span>
<svg style="left:690px;top:304px" width="6" height="6"><path d="M0 0h6v6z" fill="#14b428"/></svg>
<span class="t" style="right:889px;top:306px;">816,9</span>
<span class="t" style="right:796px;top:306px;">789,08</span>
<span class="t" style="right:730px;top:306px;">0</span>
<span class="t" style="right:664px;top:306px;">789,08</span>
<span class="t" style="right:598px;top:306px;">20,16</span>
<span class="t" style="right:532px;top:306px;">0</span>
<span class="t" style="right:466px;top:306px;">0</span>
<div style="left:1294px;top:108px;width:17px;height:601px;background:#f0f0f0;box-shadow:inset 1px 0 0 #fff"></div>
<div style="left:1311px;top:108px;width:1px;height:618px;background:#fff"></div>
<div style="left:1295px;top:250px;width:15px;height:315px;background:#cdcdcd"></div>
<svg style="left:1298px;top:112px" width="10" height="10" viewBox="0 0 10 10"><path d="M1.500 6.500l3.500-3.500 3.500 3.500" fill="none" stroke="#505050" stroke-width="1.900"/></svg>
<svg style="left:1298px;top:694px" width="10" height="10" viewBox="0 0 10 10"><path d="M1.500 3l3.500 3.500 3.500-3.500" fill="none" stroke="#505050" stroke-width="1.900"/></svg>
<div style="left:5px;top:709px;width:1307px;height:17px;background:#f0f0f0"></div>
<div style="left:23px;top:709px;width:17px;height:16px;background:#cdcdcd"></div>
<svg style="left:9px;top:712px" width="10" height="10" viewBox="0 0 10 10"><path d="M6.500 1.500l-3.500 3.500 3.500 3.500" fill="none" stroke="#505050" stroke-width="1.900"/></svg>
<svg style="left:1281px;top:712px" width="10" height="10" viewBox="0 0 10 10"><path d="M3.500 1.500l3.500 3.500-3.500 3.500" fill="none" stroke="#505050" stroke-width="1.900"/></svg>
<div style="left:1314px;top:103px;width:3px;height:625px;background:#606060;box-shadow:inset 1px 0 0 #8a8a8a"></div>
<div style="left:1316px;top:728px;width:1px;height:20px;background:#a0a0a0"></div>
<div style="left:1317px;top:103px;width:1px;height:645px;background:#fff"></div>
<div style="left:2px;top:748px;width:1754px;height:1px;background:#a0a0a0"></div>
<div style="left:2px;top:749px;width:1754px;height:3px;background:#fff"></div>
<div style="left:2px;top:728px;width:75px;height:19px;background:#f0f0f0"></div>
<div style="left:2px;top:746px;width:74px;height:1px;background:#a0a0a0"></div>
<div style="left:2px;top:747px;width:74px;height:1px;background:#606060"></div>
<span class="t" style="left:9px;top:733px;">Полный вид</span>
<div style="left:77px;top:727px;width:107px;height:19px;border:1px solid #808080;border-radius:2px;box-shadow:inset 1px 1px 0 #fff,inset -1px -1px 0 #a0a0a0;background:#f0f0f0"></div>
<span class="t" style="left:77px;width:107px;top:731px;text-align:center;">Сокращенный вид</span>
<div style="left:185px;top:727px;width:68px;height:19px;border:1px solid #808080;border-radius:2px;box-shadow:inset 1px 1px 0 #fff,inset -1px -1px 0 #a0a0a0;background:#f0f0f0"></div>
<span class="t" style="left:185px;width:68px;top:731px;text-align:center;">Вид строки</span>
<div style="left:254px;top:727px;width:101px;height:19px;border:1px solid #808080;border-radius:2px;box-shadow:inset 1px 1px 0 #fff,inset -1px -1px 0 #a0a0a0;background:#f0f0f0"></div>
<span class="t" style="left:254px;width:101px;top:731px;text-align:center;">Объектная смета</span>
<div style="left:356px;top:727px;width:86px;height:19px;border:1px solid #808080;border-radius:2px;box-shadow:inset 1px 1px 0 #fff,inset -1px -1px 0 #a0a0a0;background:#f0f0f0"></div>
<span class="t" style="left:356px;width:86px;top:731px;text-align:center;">Предпросмотр</span>
<div style="left:5px;top:709px;width:1px;height:16px;background:#a0a0a0"></div>
<div style="left:77px;top:725px;width:1237px;height:1px;background:#fff"></div>
<div style="left:77px;top:726px;width:1240px;height:1px;background:#909090"></div>
<div style="left:77px;top:727px;width:1240px;height:1px;background:#606060"></div>
<div style="left:1322px;top:108px;width:1421px;height:1px;background:#fff"></div>
<div style="left:1322px;top:109px;width:1421px;height:1px;background:#a0a0a0"></div>
<div style="left:1322px;top:111px;width:1421px;height:1px;background:#fff"></div>
<div style="left:1322px;top:112px;width:1421px;height:1px;background:#a0a0a0"></div>
<div class="rs" style="left:1746px;top:104px;width:11px;height:11px;"></div>
<svg style="left:1748px;top:106px" width="7" height="7"><path d="M.500 .500l6 6M6.500 .500l-6 6" stroke="#000" stroke-width="1"/></svg>
<div class="rs" style="left:1324px;top:119px;width:81px;height:19px;"></div>
<span class="t" style="left:1324px;width:80px;top:122px;text-align:center;">Очистить</span>
<div class="rs" style="left:1408px;top:119px;width:90px;height:19px;"></div>
<span class="t" style="left:1408px;width:89px;top:122px;text-align:center;">Справочник</span>
<div class="cb" style="left:1502px;top:122px;width:13px;height:13px;"></div>
<svg style="left:1504px;top:124px" width="9" height="9" viewBox="0 0 9 9"><path d="M1 3.500l2.500 2.500L8 1.200" fill="none" stroke="#000" stroke-width="2"/></svg>
<span class="t" style="left:1521px;top:122px;">Добавление</span>
<div style="left:1325px;top:146px;width:317px;height:16px;background:#fff"></div>
<div style="left:1628px;top:147px;width:13px;height:14px;background:#f0f0f0"></div>
<svg style="left:1631px;top:152px" width="7" height="4"><path d="M0 0h7L3.500 4z" fill="#000"/></svg>
<div class="rs" style="left:1648px;top:144px;width:80px;height:19px;"></div>
<span class="t g" style="left:1648px;width:79px;top:147px;text-align:center;">Добавить</span>
<div style="left:1732px;top:147px;width:13px;height:13px;background:#f4f4f4;box-shadow:inset 1px 1px 0 #a0a0a0,inset 2px 2px 0 #8a8a8a,inset -1px -1px 0 #fff,inset -2px -2px 0 #e3e3e3"></div>
<svg style="left:1734px;top:149px" width="9" height="9" viewBox="0 0 9 9"><path d="M1 3.500l2.500 2.500L8 1.200" fill="none" stroke="#a0a0a0" stroke-width="2"/></svg>
<div class="sk2" style="left:1324px;top:168px;width:428px;height:212px;background:#f0f0f0"></div>
<span class="t" style="left:1334px;top:173px;">Объем</span>
<div style="left:1416px;top:172px;width:301px;height:15px;background:#fff"></div>
<div style="left:1703px;top:173px;width:13px;height:13px;background:#f0f0f0"></div>
<svg style="left:1706px;top:178px" width="7" height="4"><path d="M0 0h7L3.500 4z" fill="#000"/></svg>
<div style="left:1720px;top:172px;width:12px;height:12px;background:#fff;box-shadow:inset 1px 1px 0 #a0a0a0,inset 2px 2px 0 #696969,inset -1px -1px 0 #e3e3e3"></div>
<span class="t" style="left:1334px;top:192px;">Сметная цена</span>
<div style="left:1416px;top:191px;width:301px;height:15px;background:#fff"></div>
<div style="left:1703px;top:192px;width:13px;height:13px;background:#f0f0f0"></div>
<svg style="left:1706px;top:197px" width="7" height="4"><path d="M0 0h7L3.500 4z" fill="#000"/></svg>
<div style="left:1720px;top:191px;width:12px;height:12px;background:#fff;box-shadow:inset 1px 1px 0 #a0a0a0,inset 2px 2px 0 #696969,inset -1px -1px 0 #e3e3e3"></div>
<svg style="left:1722px;top:193px" width="9" height="9" viewBox="0 0 9 9"><path d="M1 3.500l2.500 2.500L8 1.200" fill="none" stroke="#000" stroke-width="2"/></svg>
<div style="left:1326px;top:208px;width:88px;height:19px;background:#dbffe8"></div>
<div style="left:1719px;top:208px;width:15px;height:19px;background:#dbffe8"></div>
<span class="t" style="left:1334px;top:211px;">ОЗП</span>
<div style="left:1416px;top:210px;width:301px;height:15px;background:#fff"></div>
<div style="left:1703px;top:211px;width:13px;height:13px;background:#f0f0f0"></div>
<svg style="left:1706px;top:216px" width="7" height="4"><path d="M0 0h7L3.500 4z" fill="#000"/></svg>
<div style="left:1720px;top:210px;width:12px;height:12px;background:#fff;box-shadow:inset 1px 1px 0 #a0a0a0,inset 2px 2px 0 #696969,inset -1px -1px 0 #e3e3e3"></div>
<svg style="left:1722px;top:212px" width="9" height="9" viewBox="0 0 9 9"><path d="M1 3.500l2.500 2.500L8 1.200" fill="none" stroke="#000" stroke-width="2"/></svg>
<div style="left:1326px;top:227px;width:88px;height:19px;background:#dbffe8"></div>
<div style="left:1719px;top:227px;width:15px;height:19px;background:#dbffe8"></div>
<span class="t" style="left:1334px;top:230px;">ТрудСтр</span>
<div style="left:1416px;top:229px;width:301px;height:15px;background:#fff"></div>
<div style="left:1703px;top:230px;width:13px;height:13px;background:#f0f0f0"></div>
<svg style="left:1706px;top:235px" width="7" height="4"><path d="M0 0h7L3.500 4z" fill="#000"/></svg>
<div style="left:1720px;top:229px;width:12px;height:12px;background:#fff;box-shadow:inset 1px 1px 0 #a0a0a0,inset 2px 2px 0 #696969,inset -1px -1px 0 #e3e3e3"></div>
<svg style="left:1722px;top:231px" width="9" height="9" viewBox="0 0 9 9"><path d="M1 3.500l2.500 2.500L8 1.200" fill="none" stroke="#000" stroke-width="2"/></svg>
<div style="left:1326px;top:246px;width:88px;height:19px;background:#d6ebff"></div>
<div style="left:1719px;top:246px;width:15px;height:19px;background:#d6ebff"></div>
<span class="t" style="left:1334px;top:249px;">ЭММ</span>
<div style="left:1416px;top:248px;width:301px;height:15px;background:#fff"></div>
<div style="left:1703px;top:249px;width:13px;height:13px;background:#f0f0f0"></div>
<svg style="left:1706px;top:254px" width="7" height="4"><path d="M0 0h7L3.500 4z" fill="#000"/></svg>
<div style="left:1720px;top:248px;width:12px;height:12px;background:#fff;box-shadow:inset 1px 1px 0 #a0a0a0,inset 2px 2px 0 #696969,inset -1px -1px 0 #e3e3e3"></div>
<svg style="left:1722px;top:250px" width="9" height="9" viewBox="0 0 9 9"><path d="M1 3.500l2.500 2.500L8 1.200" fill="none" stroke="#000" stroke-width="2"/></svg>
<div style="left:1326px;top:265px;width:88px;height:19px;background:#d6ebff"></div>
<div style="left:1719px;top:265px;width:15px;height:19px;background:#d6ebff"></div>
<span class="t" style="left:1334px;top:268px;">НормЭММ</span>
<div style="left:1416px;top:267px;width:301px;height:15px;background:#fff"></div>
<div style="left:1703px;top:268px;width:13px;height:13px;background:#f0f0f0"></div>
<svg style="left:1706px;top:273px" width="7" height="4"><path d="M0 0h7L3.500 4z" fill="#000"/></svg>
<div style="left:1720px;top:267px;width:12px;height:12px;background:#fff;box-shadow:inset 1px 1px 0 #a0a0a0,inset 2px 2px 0 #696969,inset -1px -1px 0 #e3e3e3"></div>
<svg style="left:1722px;top:269px" width="9" height="9" viewBox="0 0 9 9"><path d="M1 3.500l2.500 2.500L8 1.200" fill="none" stroke="#000" stroke-width="2"/></svg>
<div style="left:1326px;top:284px;width:88px;height:19px;background:#d6ebff"></div>
<div style="left:1719px;top:284px;width:15px;height:19px;background:#d6ebff"></div>
<span class="t" style="left:1334px;top:287px;">ЗПМ</span>
<div style="left:1416px;top:286px;width:301px;height:15px;background:#fff"></div>
<div style="left:1703px;top:287px;width:13px;height:13px;background:#f0f0f0"></div>
<svg style="left:1706px;top:292px" width="7" height="4"><path d="M0 0h7L3.500 4z" fill="#000"/></svg>
<div style="left:1720px;top:286px;width:12px;height:12px;background:#fff;box-shadow:inset 1px 1px 0 #a0a0a0,inset 2px 2px 0 #696969,inset -1px -1px 0 #e3e3e3"></div>
<svg style="left:1722px;top:288px" width="9" height="9" viewBox="0 0 9 9"><path d="M1 3.500l2.500 2.500L8 1.200" fill="none" stroke="#000" stroke-width="2"/></svg>
<div style="left:1326px;top:303px;width:88px;height:19px;background:#d6ebff"></div>
<div style="left:1719px;top:303px;width:15px;height:19px;background:#d6ebff"></div>
<span class="t" style="left:1334px;top:306px;">ТрудМаш</span>
<div style="left:1416px;top:305px;width:301px;height:15px;background:#fff"></div>
<div style="left:1703px;top:306px;width:13px;height:13px;background:#f0f0f0"></div>
<svg style="left:1706px;top:311px" width="7" height="4"><path d="M0 0h7L3.500 4z" fill="#000"/></svg>
<div style="left:1720px;top:305px;width:12px;height:12px;background:#fff;box-shadow:inset 1px 1px 0 #a0a0a0,inset 2px 2px 0 #696969,inset -1px -1px 0 #e3e3e3"></div>
<svg style="left:1722px;top:307px" width="9" height="9" viewBox="0 0 9 9"><path d="M1 3.500l2.500 2.500L8 1.200" fill="none" stroke="#000" stroke-width="2"/></svg>
<div style="left:1326px;top:322px;width:88px;height:19px;background:#ffe8e6"></div>
<div style="left:1719px;top:322px;width:15px;height:19px;background:#ffe8e6"></div>
<span class="t" style="left:1334px;top:325px;">СтМат</span>
<div style="left:1416px;top:324px;width:301px;height:15px;background:#fff"></div>
<div style="left:1703px;top:325px;width:13px;height:13px;background:#f0f0f0"></div>
<svg style="left:1706px;top:330px" width="7" height="4"><path d="M0 0h7L3.500 4z" fill="#000"/></svg>
<div style="left:1720px;top:324px;width:12px;height:12px;background:#fff;box-shadow:inset 1px 1px 0 #a0a0a0,inset 2px 2px 0 #696969,inset -1px -1px 0 #e3e3e3"></div>
<svg style="left:1722px;top:326px" width="9" height="9" viewBox="0 0 9 9"><path d="M1 3.500l2.500 2.500L8 1.200" fill="none" stroke="#000" stroke-width="2"/></svg>
<div style="left:1326px;top:341px;width:88px;height:19px;background:#ffe8e6"></div>
<div style="left:1719px;top:341px;width:15px;height:19px;background:#ffe8e6"></div>
<span class="t" style="left:1334px;top:344px;">НормРасхМат</span>
<div style="left:1416px;top:343px;width:301px;height:15px;background:#fff"></div>
<div style="left:1703px;top:344px;width:13px;height:13px;background:#f0f0f0"></div>
<svg style="left:1706px;top:349px" width="7" height="4"><path d="M0 0h7L3.500 4z" fill="#000"/></svg>
<div style="left:1720px;top:343px;width:12px;height:12px;background:#fff;box-shadow:inset 1px 1px 0 #a0a0a0,inset 2px 2px 0 #696969,inset -1px -1px 0 #e3e3e3"></div>
<svg style="left:1722px;top:345px" width="9" height="9" viewBox="0 0 9 9"><path d="M1 3.500l2.500 2.500L8 1.200" fill="none" stroke="#000" stroke-width="2"/></svg>
<span class="t" style="left:1334px;top:363px;">Прочие</span>
<div style="left:1416px;top:362px;width:301px;height:15px;background:#fff"></div>
<div style="left:1703px;top:363px;width:13px;height:13px;background:#f0f0f0"></div>
<svg style="left:1706px;top:368px" width="7" height="4"><path d="M0 0h7L3.500 4z" fill="#000"/></svg>
<div style="left:1720px;top:362px;width:12px;height:12px;background:#fff;box-shadow:inset 1px 1px 0 #a0a0a0,inset 2px 2px 0 #696969,inset -1px -1px 0 #e3e3e3"></div>
<svg style="left:1722px;top:364px" width="9" height="9" viewBox="0 0 9 9"><path d="M1 3.500l2.500 2.500L8 1.200" fill="none" stroke="#000" stroke-width="2"/></svg>
<div class="hat" style="left:1734px;top:170px;width:17px;height:208px;"></div>
<div class="rs" style="left:1734px;top:170px;width:17px;height:17px;"></div>
<svg style="left:1739px;top:176px" width="7" height="4"><path d="M0 4h7L3.500 0z" fill="#000"/></svg>
<div class="rs" style="left:1734px;top:187px;width:17px;height:148px;"></div>
<div class="rs" style="left:1734px;top:361px;width:17px;height:17px;"></div>
<svg style="left:1739px;top:368px" width="7" height="4"><path d="M0 0h7L3.500 4z" fill="#000"/></svg>
<div class="sk2" style="left:1324px;top:391px;width:428px;height:255px;background:#fff"></div>
<div style="left:1735px;top:393px;width:16px;height:251px;background:#f0f0f0"></div>
<svg style="left:1738px;top:398px" width="10" height="10" viewBox="0 0 10 10"><path d="M1.500 6.500l3.500-3.500 3.500 3.500" fill="none" stroke="#c0c0c0" stroke-width="1.900"/></svg>
<svg style="left:1738px;top:631px" width="10" height="10" viewBox="0 0 10 10"><path d="M1.500 3l3.500 3.500 3.500-3.500" fill="none" stroke="#c0c0c0" stroke-width="1.900"/></svg>
<div style="left:1325px;top:651px;width:12px;height:12px;background:#fff;box-shadow:inset 1px 1px 0 #696969,inset -1px -1px 0 #e3e3e3"></div>
<span class="t" style="left:1342px;top:651px;">Показывать в наименовании</span>
<div style="left:1318px;top:672px;width:439px;height:1px;background:#696969"></div>
<div class="hat" style="left:1318px;top:673px;width:439px;height:23px;"></div>
<svg style="left:1322px;top:673px" width="150" height="17" viewBox="0 0 150 17"><path d="M4 0l5 15.500h66L80 0" fill="#f0f0f0" stroke="none"/><path d="M4 0l5 15.500h66L80 0" fill="none" stroke="#000" stroke-width="1"/><path d="M80 2l-4 13.500" stroke="#000" fill="none"/><path d="M80 2q2-2 4 0v13.500h50L139 0" fill="#fff" stroke="#404040" stroke-width="1"/></svg>
<span class="t" style="left:1334px;top:675px;">Примечание</span>
<span class="t" style="left:1407px;top:675px;">Поправка</span>
<div class="cb" style="left:1328px;top:700px;width:13px;height:13px;"></div>
<svg style="left:1330px;top:702px" width="9" height="9" viewBox="0 0 9 9"><path d="M1 3.500l2.500 2.500L8 1.200" fill="none" stroke="#000" stroke-width="2"/></svg>
<span class="t" style="left:1347px;top:700px;">Заменять назначенные</span>
<div class="rs" style="left:1328px;top:718px;width:207px;height:25px;"></div>
<span class="t g" style="left:1328px;width:206px;top:724px;text-align:center;">Применить</span>
<div class="rs" style="left:1542px;top:718px;width:207px;height:25px;"></div>
<span class="t g" style="left:1542px;width:206px;top:724px;text-align:center;">Отменить</span>
<div style="left:3px;top:753px;width:10px;height:10px;border:1px solid #a0a0a0;background:#f0f0f0;box-shadow:inset 1px 1px 0 #fff"></div>
<svg style="left:5px;top:755px" width="6" height="6"><path d="M0 0l6 6M6 0l-6 6" stroke="#000" stroke-width="1"/></svg>
<div style="left:6px;top:765px;width:1px;height:320px;background:#a0a0a0"></div>
<div style="left:7px;top:765px;width:1px;height:320px;background:#fff"></div>
<div style="left:9px;top:765px;width:1px;height:320px;background:#a0a0a0"></div>
<div style="left:10px;top:765px;width:1px;height:320px;background:#fff"></div>
<div style="left:17px;top:757px;width:21px;height:1px;background:#a0a0a0"></div>
<div style="left:17px;top:758px;width:21px;height:1px;background:#fff"></div>
<div style="left:17px;top:806px;width:21px;height:1px;background:#a0a0a0"></div>
<div style="left:17px;top:807px;width:21px;height:1px;background:#fff"></div>
<div style="left:17px;top:834px;width:21px;height:1px;background:#a0a0a0"></div>
<div style="left:17px;top:835px;width:21px;height:1px;background:#fff"></div>
<div style="left:17px;top:862px;width:21px;height:1px;background:#a0a0a0"></div>
<div style="left:17px;top:863px;width:21px;height:1px;background:#fff"></div>
<svg style="left:20px;top:764px;" width="14" height="14" viewBox="0 0 14 14"><use href="#gplus"/></svg>
<svg style="left:19px;top:785px;" width="16" height="16" viewBox="0 0 16 16"><use href="#gup"/></svg>
<svg style="left:21px;top:815px" width="12" height="12" viewBox="0 0 12 12"><path d="M1 1l10 10M11 1L1 11" stroke="#f05a3c" stroke-width="1.500" stroke-linecap="round"/></svg>
<svg style="left:22px;top:842px" width="10" height="14" viewBox="0 0 10 14"><path d="M1.500 4h6M4.500 1v6" stroke="#4a9a1e" stroke-width="2.400" stroke-linecap="round"/><rect x="1.500" y="10" width="6" height="2.200" rx="1" fill="#f0502a"/></svg>
<svg style="left:18px;top:868px;" width="16" height="16" viewBox="0 0 16 16"><use href="#vred"/></svg>
<div style="left:14px;top:752px;width:1px;height:139px;background:#fff"></div>
<div style="left:40px;top:752px;width:1px;height:138px;background:#a0a0a0"></div>
<div style="left:14px;top:889px;width:27px;height:1px;background:#a0a0a0"></div>
<div style="left:41px;top:752px;width:1716px;height:293px;background:#fff"></div>
<div style="left:41px;top:752px;width:1650px;height:50px;background:#808080"></div>
<div style="left:42px;top:753px;width:11px;height:48px;background:#f0f0f0;box-shadow:inset 1px 1px 0 #fff"></div>
<div style="left:54px;top:753px;width:20px;height:48px;background:#f0f0f0;box-shadow:inset 1px 1px 0 #fff"></div>
<span class="t" style="left:56px;top:772px;width:18px;overflow:hidden">Ста</span>
<div style="left:75px;top:753px;width:20px;height:48px;background:#f0f0f0;box-shadow:inset 1px 1px 0 #fff"></div>
<span class="t" style="left:77px;top:772px;width:18px;overflow:hidden">Тип</span>
<div style="left:96px;top:753px;width:22px;height:48px;background:#f0f0f0;box-shadow:inset 1px 1px 0 #fff"></div>
<span class="t" style="left:98px;top:772px;width:20px;overflow:hidden">Учт</span>
<div style="left:119px;top:753px;width:44px;height:48px;background:#f0f0f0;box-shadow:inset 1px 1px 0 #fff"></div>
<span class="t" style="left:121px;top:765px;width:42px;overflow:hidden">Добавл</span>
<span class="t" style="left:121px;top:778px;width:42px;overflow:hidden">в цену</span>
<div style="left:164px;top:753px;width:129px;height:48px;background:#f0f0f0;box-shadow:inset 1px 1px 0 #fff"></div>
<span class="t" style="left:166px;top:772px;width:127px;overflow:hidden">Обоснование</span>
<div style="left:294px;top:753px;width:226px;height:48px;background:#f0f0f0;box-shadow:inset 1px 1px 0 #fff"></div>
<span class="t" style="left:296px;top:772px;width:224px;overflow:hidden">Наименование</span>
<div style="left:521px;top:753px;width:50px;height:48px;background:#f0f0f0;box-shadow:inset 1px 1px 0 #fff"></div>
<span class="t" style="left:523px;top:765px;width:48px;overflow:hidden">Ед.изм.</span>
<span class="t" style="left:523px;top:778px;width:48px;overflow:hidden">(краткая)</span>
<div style="left:572px;top:753px;width:60px;height:48px;background:#f0f0f0;box-shadow:inset 1px 1px 0 #fff"></div>
<span class="t" style="left:574px;top:759px;width:58px;overflow:hidden">Базовый</span>
<span class="t" style="left:574px;top:772px;width:58px;overflow:hidden">расход на</span>
<span class="t" style="left:574px;top:785px;width:58px;overflow:hidden">ед.</span>
<div style="left:633px;top:753px;width:60px;height:48px;background:#f0f0f0;box-shadow:inset 1px 1px 0 #fff"></div>
<span class="t" style="left:635px;top:772px;width:58px;overflow:hidden">Поправка</span>
<div style="left:694px;top:753px;width:60px;height:48px;background:#f0f0f0;box-shadow:inset 1px 1px 0 #fff"></div>
<span class="t" style="left:696px;top:765px;width:58px;overflow:hidden">Расход на</span>
<span class="t" style="left:696px;top:778px;width:58px;overflow:hidden">ед.</span>
<div style="left:755px;top:753px;width:60px;height:48px;background:#f0f0f0;box-shadow:inset 1px 1px 0 #fff"></div>
<span class="t" style="left:757px;top:772px;width:58px;overflow:hidden">Общий расход</span>
<div style="left:816px;top:771px;width:60px;height:30px;background:#f0f0f0;box-shadow:inset 1px 1px 0 #fff"></div>
<span class="t" style="left:818px;top:774px;width:58px;overflow:hidden">Базовая</span>
<span class="t" style="left:818px;top:787px;width:58px;overflow:hidden">цена</span>
<div style="left:877px;top:771px;width:60px;height:30px;background:#f0f0f0;box-shadow:inset 1px 1px 0 #fff"></div>
<span class="t" style="left:879px;top:774px;width:58px;overflow:hidden">Базовая</span>
<span class="t" style="left:879px;top:787px;width:58px;overflow:hidden">ЗПМ</span>
<div style="left:938px;top:771px;width:60px;height:30px;background:#f0f0f0;box-shadow:inset 1px 1px 0 #fff"></div>
<span class="t" style="left:940px;top:774px;width:58px;overflow:hidden">Базовая</span>
<span class="t" style="left:940px;top:787px;width:58px;overflow:hidden">стоимость</span>
<div style="left:999px;top:771px;width:60px;height:30px;background:#f0f0f0;box-shadow:inset 1px 1px 0 #fff"></div>
<span class="t" style="left:1001px;top:781px;width:58px;overflow:hidden">Процент</span>
<div style="left:1060px;top:771px;width:60px;height:30px;background:#f0f0f0;box-shadow:inset 1px 1px 0 #fff"></div>
<span class="t" style="left:1062px;top:781px;width:58px;overflow:hidden">Цена</span>
<div style="left:1121px;top:771px;width:60px;height:30px;background:#f0f0f0;box-shadow:inset 1px 1px 0 #fff"></div>
<span class="t" style="left:1123px;top:774px;width:58px;overflow:hidden">Базовая</span>
<span class="t" style="left:1123px;top:787px;width:58px;overflow:hidden">ЗПМ</span>
<div style="left:1182px;top:771px;width:64px;height:30px;background:#f0f0f0;box-shadow:inset 1px 1px 0 #fff"></div>
<span class="t" style="left:1184px;top:774px;width:62px;overflow:hidden">Тек. цена</span>
<span class="t" style="left:1184px;top:787px;width:62px;overflow:hidden">[справочно]</span>
<div style="left:1247px;top:771px;width:64px;height:30px;background:#f0f0f0;box-shadow:inset 1px 1px 0 #fff"></div>
<span class="t" style="left:1249px;top:774px;width:62px;overflow:hidden">Тек. ЗПМ</span>
<span class="t" style="left:1249px;top:787px;width:62px;overflow:hidden">[справочно]</span>
<div style="left:1312px;top:771px;width:60px;height:30px;background:#f0f0f0;box-shadow:inset 1px 1px 0 #fff"></div>
<span class="t" style="left:1314px;top:774px;width:58px;overflow:hidden">Текущая</span>
<span class="t" style="left:1314px;top:787px;width:58px;overflow:hidden">стоимость</span>
<div style="left:1373px;top:771px;width:60px;height:30px;background:#f0f0f0;box-shadow:inset 1px 1px 0 #fff"></div>
<span class="t" style="left:1375px;top:781px;width:58px;overflow:hidden">Процент</span>
<div style="left:1434px;top:753px;width:120px;height:48px;background:#f0f0f0;box-shadow:inset 1px 1px 0 #fff"></div>
<span class="t" style="left:1436px;top:765px;width:118px;overflow:hidden">Альтернативное</span>
<span class="t" style="left:1436px;top:778px;width:118px;overflow:hidden">обоснование</span>
<div style="left:1555px;top:753px;width:64px;height:48px;background:#f0f0f0;box-shadow:inset 1px 1px 0 #fff"></div>
<span class="t" style="left:1557px;top:765px;width:62px;overflow:hidden">Вид</span>
<span class="t" style="left:1557px;top:778px;width:62px;overflow:hidden">ресурса</span>
<div style="left:1620px;top:753px;width:70px;height:48px;background:#f0f0f0;box-shadow:inset 1px 1px 0 #fff"></div>
<span class="t" style="left:1622px;top:765px;width:68px;overflow:hidden">Тип</span>
<span class="t" style="left:1622px;top:778px;width:68px;overflow:hidden">трудозатрат</span>
<div style="left:1182px;top:753px;width:251px;height:17px;background:#f0f0f0;box-shadow:inset 1px 1px 0 #fff"></div>
<span class="t" style="left:1184px;top:756px;">Уровень цен</span>
<div style="left:816px;top:753px;width:365px;height:17px;background:#f0f0f0;box-shadow:inset 1px 1px 0 #fff"></div>
<div style="left:54px;top:802px;width:1637px;height:15px;background:#dbffe8"></div>
<div style="left:42px;top:802px;width:11px;height:15px;background:#f0f0f0"></div>
<div style="left:119px;top:802px;width:44px;height:15px;background:#e2f4e8"></div>
<div style="left:938px;top:802px;width:60px;height:15px;background:#e2f4e8"></div>
<div style="left:1312px;top:802px;width:60px;height:15px;background:#e2f4e8"></div>
<div style="left:999px;top:802px;width:60px;height:15px;background:#fff"></div>
<div style="left:1373px;top:802px;width:60px;height:15px;background:#fff"></div>
<div style="left:41px;top:817px;width:1650px;height:1px;background:#c0c0c0"></div>
<div style="left:41px;top:817px;width:13px;height:1px;background:#808080"></div>
<div style="left:42px;top:802px;width:11px;height:1px;background:#fff"></div>
<svg style="left:77px;top:802px;" width="16" height="16" viewBox="0 0 16 16"><use href="#worker"/></svg>
<div style="left:102px;top:804px;width:11px;height:11px;background:#fff;border:1px solid #a8a8a8"></div>
<svg style="left:103px;top:805px" width="9" height="9" viewBox="0 0 9 9"><path d="M1 3.500l2.500 2.500L8 1.200" fill="none" stroke="#b0b0b0" stroke-width="2"/></svg>
<div style="left:136px;top:804px;width:11px;height:11px;background:#fff;border:1px solid #a0a0a0"></div>
<svg style="left:137px;top:805px" width="9" height="9" viewBox="0 0 9 9"><path d="M1 3.500l2.500 2.500L8 1.200" fill="none" stroke="#000" stroke-width="2"/></svg>
<span class="t" style="left:166px;top:804px;">1-100-48</span>
<span class="t" style="left:296px;top:804px;width:224px;overflow:hidden">Средний разряд работы 4,8</span>
<span class="t" style="left:523px;top:804px;">чел.-ч.</span>
<span class="t" style="left:574px;top:804px;">2 182</span>
<span class="t" style="left:696px;top:804px;">2 182</span>
<span class="t" style="left:757px;top:804px;">174,56</span>
<span class="t" style="left:818px;top:804px;">0</span>
<span class="t" style="left:879px;top:804px;">0</span>
<span class="t" style="left:940px;top:804px;">0</span>
<span class="t" style="left:998px;width:62px;top:804px;text-align:center;">0%</span>
<span class="t" style="left:1062px;top:804px;">0</span>
<span class="t" style="left:1123px;top:804px;">0</span>
<span class="t" style="left:1184px;top:804px;">0</span>
<span class="t" style="left:1249px;top:804px;">0</span>
<span class="t" style="left:1314px;top:804px;">0</span>
<span class="t" style="left:1372px;width:62px;top:804px;text-align:center;">0%</span>
<span class="t" style="left:1436px;top:804px;width:118px;overflow:hidden">[Уровень цен]: цена - б.</span>
<span class="t" style="left:1557px;top:804px;">Обычный</span>
<span class="t" style="left:1622px;top:804px;">Строители</span>
<div style="left:54px;top:818px;width:1637px;height:15px;background:#dbffe8"></div>
<div style="left:42px;top:818px;width:11px;height:15px;background:#f0f0f0"></div>
<div style="left:119px;top:818px;width:44px;height:15px;background:#e2f4e8"></div>
<div style="left:938px;top:818px;width:60px;height:15px;background:#e2f4e8"></div>
<div style="left:1312px;top:818px;width:60px;height:15px;background:#e2f4e8"></div>
<div style="left:999px;top:818px;width:60px;height:15px;background:#fff"></div>
<div style="left:1373px;top:818px;width:60px;height:15px;background:#fff"></div>
<div style="left:41px;top:833px;width:1650px;height:1px;background:#c0c0c0"></div>
<div style="left:41px;top:833px;width:13px;height:1px;background:#808080"></div>
<div style="left:42px;top:818px;width:11px;height:1px;background:#fff"></div>
<svg style="left:77px;top:818px;" width="16" height="16" viewBox="0 0 16 16"><use href="#worker"/></svg>
<div style="left:102px;top:820px;width:11px;height:11px;background:#fff;border:1px solid #a8a8a8"></div>
<svg style="left:103px;top:821px" width="9" height="9" viewBox="0 0 9 9"><path d="M1 3.500l2.500 2.500L8 1.200" fill="none" stroke="#b0b0b0" stroke-width="2"/></svg>
<div style="left:136px;top:820px;width:11px;height:11px;background:#fff;border:1px solid #a0a0a0"></div>
<svg style="left:137px;top:821px" width="9" height="9" viewBox="0 0 9 9"><path d="M1 3.500l2.500 2.500L8 1.200" fill="none" stroke="#000" stroke-width="2"/></svg>
<span class="t" style="left:166px;top:820px;">4-100-00</span>
<span class="t" style="left:296px;top:820px;width:224px;overflow:hidden">Затраты труда машинистов</span>
<span class="t" style="left:523px;top:820px;">чел.-ч.</span>
<span class="t" style="left:574px;top:820px;">4,24</span>
<span class="t" style="left:696px;top:820px;">4,24</span>
<span class="t" style="left:757px;top:820px;">0,3392</span>
<span class="t" style="left:818px;top:820px;">0</span>
<span class="t" style="left:879px;top:820px;">0</span>
<span class="t" style="left:940px;top:820px;">0</span>
<span class="t" style="left:998px;width:62px;top:820px;text-align:center;">0%</span>
<span class="t" style="left:1062px;top:820px;">0</span>
<span class="t" style="left:1123px;top:820px;">0</span>
<span class="t" style="left:1184px;top:820px;">0</span>
<span class="t" style="left:1249px;top:820px;">0</span>
<span class="t" style="left:1314px;top:820px;">0</span>
<span class="t" style="left:1372px;width:62px;top:820px;text-align:center;">0%</span>
<span class="t" style="left:1436px;top:820px;width:118px;overflow:hidden">[Уровень цен]: цена - б.</span>
<span class="t" style="left:1557px;top:820px;">Обычный</span>
<span class="t" style="left:1622px;top:820px;">Машинисты</span>
<div style="left:54px;top:834px;width:1637px;height:15px;background:#d6ebff"></div>
<div style="left:42px;top:834px;width:11px;height:15px;background:#f0f0f0"></div>
<div style="left:119px;top:834px;width:44px;height:15px;background:#e0eaf4"></div>
<div style="left:938px;top:834px;width:60px;height:15px;background:#e0eaf4"></div>
<div style="left:1312px;top:834px;width:60px;height:15px;background:#e0eaf4"></div>
<div style="left:1620px;top:834px;width:70px;height:15px;background:#e0eaf4"></div>
<div style="left:999px;top:834px;width:60px;height:15px;background:#fff"></div>
<div style="left:1373px;top:834px;width:60px;height:15px;background:#fff"></div>
<div style="left:41px;top:849px;width:1650px;height:1px;background:#c0c0c0"></div>
<div style="left:41px;top:849px;width:13px;height:1px;background:#808080"></div>
<div style="left:42px;top:834px;width:11px;height:1px;background:#fff"></div>
<svg style="left:77px;top:834px;" width="16" height="16" viewBox="0 0 16 16"><use href="#truck"/></svg>
<div style="left:102px;top:836px;width:11px;height:11px;background:#fff;border:1px solid #a8a8a8"></div>
<svg style="left:103px;top:837px" width="9" height="9" viewBox="0 0 9 9"><path d="M1 3.500l2.500 2.500L8 1.200" fill="none" stroke="#b0b0b0" stroke-width="2"/></svg>
<div style="left:136px;top:836px;width:11px;height:11px;background:#fff;border:1px solid #a0a0a0"></div>
<svg style="left:137px;top:837px" width="9" height="9" viewBox="0 0 9 9"><path d="M1 3.500l2.500 2.500L8 1.200" fill="none" stroke="#000" stroke-width="2"/></svg>
<span class="t" style="left:166px;top:836px;">91.06.05-011</span>
<span class="t" style="left:296px;top:836px;width:224px;overflow:hidden">Погрузчики одноковшовые универсальные</span>
<span class="t" style="left:523px;top:836px;">маш.-ч</span>
<span class="t" style="left:574px;top:836px;">0,6</span>
<span class="t" style="left:696px;top:836px;">0,6</span>
<span class="t" style="left:757px;top:836px;">0,048</span>
<span class="t" style="left:818px;top:836px;">1 408,28</span>
<span class="t" style="left:879px;top:836px;">386,65</span>
<span class="t" style="left:940px;top:836px;">844,97</span>
<div style="left:1001px;top:836px;width:47px;height:11px;background:#b4b4c8"></div>
<span class="t" style="left:998px;width:62px;top:836px;text-align:center;">86,15%</span>
<span class="t" style="left:1062px;top:836px;">1 408,28</span>
<span class="t" style="left:1123px;top:836px;">386,65</span>
<span class="t" style="left:1184px;top:836px;">1 408,28</span>
<span class="t" style="left:1249px;top:836px;">386,65</span>
<span class="t" style="left:1314px;top:836px;">844,97</span>
<div style="left:1375px;top:836px;width:47px;height:11px;background:#b4b4c8"></div>
<span class="t" style="left:1372px;width:62px;top:836px;text-align:center;">86,15%</span>
<span class="t" style="left:1436px;top:836px;width:118px;overflow:hidden">ФСЭМ-2022, 91.06.05-0</span>
<span class="t" style="left:1557px;top:836px;">Обычный</span>
<span class="t" style="left:1622px;top:836px;"></span>
<div style="left:54px;top:850px;width:1637px;height:15px;background:#d6ebff"></div>
<div style="left:42px;top:850px;width:11px;height:15px;background:#f0f0f0"></div>
<div style="left:119px;top:850px;width:44px;height:15px;background:#e0eaf4"></div>
<div style="left:938px;top:850px;width:60px;height:15px;background:#e0eaf4"></div>
<div style="left:1312px;top:850px;width:60px;height:15px;background:#e0eaf4"></div>
<div style="left:1620px;top:850px;width:70px;height:15px;background:#e0eaf4"></div>
<div style="left:999px;top:850px;width:60px;height:15px;background:#fff"></div>
<div style="left:1373px;top:850px;width:60px;height:15px;background:#fff"></div>
<div style="left:41px;top:865px;width:1650px;height:1px;background:#c0c0c0"></div>
<div style="left:41px;top:865px;width:13px;height:1px;background:#808080"></div>
<div style="left:42px;top:850px;width:11px;height:1px;background:#fff"></div>
<svg style="left:77px;top:850px;" width="16" height="16" viewBox="0 0 16 16"><use href="#truck"/></svg>
<div style="left:102px;top:852px;width:11px;height:11px;background:#fff;border:1px solid #a8a8a8"></div>
<svg style="left:103px;top:853px" width="9" height="9" viewBox="0 0 9 9"><path d="M1 3.500l2.500 2.500L8 1.200" fill="none" stroke="#b0b0b0" stroke-width="2"/></svg>
<div style="left:136px;top:852px;width:11px;height:11px;background:#fff;border:1px solid #a0a0a0"></div>
<svg style="left:137px;top:853px" width="9" height="9" viewBox="0 0 9 9"><path d="M1 3.500l2.500 2.500L8 1.200" fill="none" stroke="#000" stroke-width="2"/></svg>
<span class="t" style="left:166px;top:852px;">91.06.06-048</span>
<span class="t" style="left:296px;top:852px;width:224px;overflow:hidden">Подъемники одномачтовые, грузоподъемно</span>
<span class="t" style="left:523px;top:852px;">маш.-ч</span>
<span class="t" style="left:574px;top:852px;">3,64</span>
<span class="t" style="left:696px;top:852px;">3,64</span>
<span class="t" style="left:757px;top:852px;">0,2912</span>
<span class="t" style="left:818px;top:852px;">37,32</span>
<span class="t" style="left:879px;top:852px;">298,77</span>
<span class="t" style="left:940px;top:852px;">135,84</span>
<div style="left:1001px;top:852px;width:8px;height:11px;background:#b4b4c8"></div>
<span class="t" style="left:998px;width:62px;top:852px;text-align:center;">13,85%</span>
<span class="t" style="left:1062px;top:852px;">37,32</span>
<span class="t" style="left:1123px;top:852px;">298,77</span>
<span class="t" style="left:1184px;top:852px;">37,32</span>
<span class="t" style="left:1249px;top:852px;">298,77</span>
<span class="t" style="left:1314px;top:852px;">135,84</span>
<div style="left:1375px;top:852px;width:8px;height:11px;background:#b4b4c8"></div>
<span class="t" style="left:1372px;width:62px;top:852px;text-align:center;">13,85%</span>
<span class="t" style="left:1436px;top:852px;width:118px;overflow:hidden">ФСЭМ-2022, 91.06.06-0</span>
<span class="t" style="left:1557px;top:852px;">Обычный</span>
<span class="t" style="left:1622px;top:852px;"></span>
<div style="left:54px;top:866px;width:1637px;height:15px;background:#ffe8e6"></div>
<div style="left:42px;top:866px;width:11px;height:15px;background:#f0f0f0"></div>
<div style="left:119px;top:866px;width:44px;height:15px;background:#f6e9e8"></div>
<div style="left:938px;top:866px;width:60px;height:15px;background:#f6e9e8"></div>
<div style="left:1312px;top:866px;width:60px;height:15px;background:#f6e9e8"></div>
<div style="left:1620px;top:866px;width:70px;height:15px;background:#f6e9e8"></div>
<div style="left:999px;top:866px;width:60px;height:15px;background:#fff"></div>
<div style="left:1373px;top:866px;width:60px;height:15px;background:#fff"></div>
<div style="left:41px;top:881px;width:1650px;height:1px;background:#c0c0c0"></div>
<div style="left:41px;top:881px;width:13px;height:1px;background:#808080"></div>
<div style="left:42px;top:866px;width:11px;height:1px;background:#fff"></div>
<svg style="left:77px;top:866px;" width="16" height="16" viewBox="0 0 16 16"><use href="#bricks"/></svg>
<div style="left:102px;top:868px;width:11px;height:11px;background:#fff;border:1px solid #a8a8a8"></div>
<svg style="left:103px;top:869px" width="9" height="9" viewBox="0 0 9 9"><path d="M1 3.500l2.500 2.500L8 1.200" fill="none" stroke="#b0b0b0" stroke-width="2"/></svg>
<div style="left:136px;top:868px;width:11px;height:11px;background:#fff;border:1px solid #a0a0a0"></div>
<svg style="left:137px;top:869px" width="9" height="9" viewBox="0 0 9 9"><path d="M1 3.500l2.500 2.500L8 1.200" fill="none" stroke="#000" stroke-width="2"/></svg>
<span class="t" style="left:166px;top:868px;">01.7.02.10-0005</span>
<span class="t" style="left:296px;top:868px;width:224px;overflow:hidden">Бумага ролевая</span>
<span class="t" style="left:523px;top:868px;">т</span>
<span class="t" style="left:574px;top:868px;">0,007</span>
<span class="t" style="left:696px;top:868px;">0,007</span>
<span class="t" style="left:757px;top:868px;">0,00056</span>
<span class="t" style="left:818px;top:868px;">56 758,82</span>
<span class="t" style="left:879px;top:868px;">0</span>
<span class="t" style="left:940px;top:868px;">397,31</span>
<div style="left:1001px;top:868px;width:1px;height:11px;background:#b4b4c8"></div>
<span class="t" style="left:998px;width:62px;top:868px;text-align:center;">2,62%</span>
<span class="t" style="left:1062px;top:868px;">56 758,82</span>
<span class="t" style="left:1123px;top:868px;">0</span>
<span class="t" style="left:1184px;top:868px;">56 758,82</span>
<span class="t" style="left:1249px;top:868px;">0</span>
<span class="t" style="left:1314px;top:868px;">397,31</span>
<div style="left:1375px;top:868px;width:1px;height:11px;background:#b4b4c8"></div>
<span class="t" style="left:1372px;width:62px;top:868px;text-align:center;">2,62%</span>
<span class="t" style="left:1436px;top:868px;width:118px;overflow:hidden">ФСБЦ-2022, 01.7.02.10</span>
<span class="t" style="left:1557px;top:868px;">Обычный</span>
<span class="t" style="left:1622px;top:868px;"></span>
<div style="left:54px;top:882px;width:1637px;height:15px;background:#ffe8e6"></div>
<div style="left:42px;top:882px;width:11px;height:15px;background:#f0f0f0"></div>
<div style="left:119px;top:882px;width:44px;height:15px;background:#f6e9e8"></div>
<div style="left:938px;top:882px;width:60px;height:15px;background:#f6e9e8"></div>
<div style="left:1312px;top:882px;width:60px;height:15px;background:#f6e9e8"></div>
<div style="left:1620px;top:882px;width:70px;height:15px;background:#f6e9e8"></div>
<div style="left:999px;top:882px;width:60px;height:15px;background:#fff"></div>
<div style="left:1373px;top:882px;width:60px;height:15px;background:#fff"></div>
<div style="left:41px;top:897px;width:1650px;height:1px;background:#c0c0c0"></div>
<div style="left:41px;top:897px;width:13px;height:1px;background:#808080"></div>
<div style="left:42px;top:882px;width:11px;height:1px;background:#fff"></div>
<svg style="left:77px;top:882px;" width="16" height="16" viewBox="0 0 16 16"><use href="#bricks"/></svg>
<div style="left:102px;top:884px;width:11px;height:11px;background:#fff;border:1px solid #a8a8a8"></div>
<svg style="left:103px;top:885px" width="9" height="9" viewBox="0 0 9 9"><path d="M1 3.500l2.500 2.500L8 1.200" fill="none" stroke="#b0b0b0" stroke-width="2"/></svg>
<div style="left:136px;top:884px;width:11px;height:11px;background:#fff;border:1px solid #a0a0a0"></div>
<svg style="left:137px;top:885px" width="9" height="9" viewBox="0 0 9 9"><path d="M1 3.500l2.500 2.500L8 1.200" fill="none" stroke="#000" stroke-width="2"/></svg>
<span class="t" style="left:166px;top:884px;">01.7.03.01-0001</span>
<span class="t" style="left:296px;top:884px;width:224px;overflow:hidden">Вода</span>
<span class="t" style="left:523px;top:884px;">м3</span>
<span class="t" style="left:574px;top:884px;">3,56</span>
<span class="t" style="left:696px;top:884px;">3,56</span>
<span class="t" style="left:757px;top:884px;">0,2848</span>
<span class="t" style="left:818px;top:884px;">35,71</span>
<span class="t" style="left:879px;top:884px;">0</span>
<span class="t" style="left:940px;top:884px;">127,13</span>
<span class="t" style="left:998px;width:62px;top:884px;text-align:center;">0,84%</span>
<span class="t" style="left:1062px;top:884px;">35,71</span>
<span class="t" style="left:1123px;top:884px;">0</span>
<span class="t" style="left:1184px;top:884px;">35,71</span>
<span class="t" style="left:1249px;top:884px;">0</span>
<span class="t" style="left:1314px;top:884px;">127,13</span>
<span class="t" style="left:1372px;width:62px;top:884px;text-align:center;">0,84%</span>
<span class="t" style="left:1436px;top:884px;width:118px;overflow:hidden">ФСБЦ-2022, 01.7.03.01</span>
<span class="t" style="left:1557px;top:884px;">Обычный</span>
<span class="t" style="left:1622px;top:884px;"></span>
<div style="left:54px;top:898px;width:1637px;height:15px;background:#ffe8e6"></div>
<div style="left:42px;top:898px;width:11px;height:15px;background:#f0f0f0"></div>
<div style="left:119px;top:898px;width:44px;height:15px;background:#f6e9e8"></div>
<div style="left:938px;top:898px;width:60px;height:15px;background:#f6e9e8"></div>
<div style="left:1312px;top:898px;width:60px;height:15px;background:#f6e9e8"></div>
<div style="left:1620px;top:898px;width:70px;height:15px;background:#f6e9e8"></div>
<div style="left:999px;top:898px;width:60px;height:15px;background:#fff"></div>
<div style="left:1373px;top:898px;width:60px;height:15px;background:#fff"></div>
<div style="left:41px;top:913px;width:1650px;height:1px;background:#c0c0c0"></div>
<div style="left:41px;top:913px;width:13px;height:1px;background:#808080"></div>
<div style="left:42px;top:898px;width:11px;height:1px;background:#fff"></div>
<svg style="left:77px;top:898px;" width="16" height="16" viewBox="0 0 16 16"><use href="#bricks"/></svg>
<div style="left:102px;top:900px;width:11px;height:11px;background:#fff;border:1px solid #a8a8a8"></div>
<svg style="left:103px;top:901px" width="9" height="9" viewBox="0 0 9 9"><path d="M1 3.500l2.500 2.500L8 1.200" fill="none" stroke="#b0b0b0" stroke-width="2"/></svg>
<div style="left:136px;top:900px;width:11px;height:11px;background:#fff;border:1px solid #a0a0a0"></div>
<svg style="left:137px;top:901px" width="9" height="9" viewBox="0 0 9 9"><path d="M1 3.500l2.500 2.500L8 1.200" fill="none" stroke="#000" stroke-width="2"/></svg>
<span class="t" style="left:166px;top:900px;">01.7.03.04-0001</span>
<span class="t" style="left:296px;top:900px;width:224px;overflow:hidden">Электроэнергия</span>
<span class="t" style="left:523px;top:900px;">КВТ-Ч</span>
<span class="t" style="left:574px;top:900px;">20,25</span>
<span class="t" style="left:696px;top:900px;">20,25</span>
<span class="t" style="left:757px;top:900px;">1,62</span>
<span class="t" style="left:818px;top:900px;">4,94</span>
<span class="t" style="left:879px;top:900px;">0</span>
<span class="t" style="left:940px;top:900px;">100,04</span>
<span class="t" style="left:998px;width:62px;top:900px;text-align:center;">0,66%</span>
<span class="t" style="left:1062px;top:900px;">4,94</span>
<span class="t" style="left:1123px;top:900px;">0</span>
<span class="t" style="left:1184px;top:900px;">4,94</span>
<span class="t" style="left:1249px;top:900px;">0</span>
<span class="t" style="left:1314px;top:900px;">100,04</span>
<span class="t" style="left:1372px;width:62px;top:900px;text-align:center;">0,66%</span>
<span class="t" style="left:1436px;top:900px;width:118px;overflow:hidden">ФСБЦ-2022, 01.7.03.04</span>
<span class="t" style="left:1557px;top:900px;">Обычный</span>
<span class="t" style="left:1622px;top:900px;"></span>
<div style="left:54px;top:914px;width:1637px;height:15px;background:#ffe8e6"></div>
<div style="left:42px;top:914px;width:11px;height:15px;background:#f0f0f0"></div>
<div style="left:119px;top:914px;width:44px;height:15px;background:#f6e9e8"></div>
<div style="left:938px;top:914px;width:60px;height:15px;background:#f6e9e8"></div>
<div style="left:1312px;top:914px;width:60px;height:15px;background:#f6e9e8"></div>
<div style="left:1620px;top:914px;width:70px;height:15px;background:#f6e9e8"></div>
<div style="left:999px;top:914px;width:60px;height:15px;background:#fff"></div>
<div style="left:1373px;top:914px;width:60px;height:15px;background:#fff"></div>
<div style="left:41px;top:929px;width:1650px;height:1px;background:#c0c0c0"></div>
<div style="left:41px;top:929px;width:13px;height:1px;background:#808080"></div>
<div style="left:42px;top:914px;width:11px;height:1px;background:#fff"></div>
<svg style="left:77px;top:914px;" width="16" height="16" viewBox="0 0 16 16"><use href="#bricks"/></svg>
<div style="left:102px;top:916px;width:11px;height:11px;background:#fff;border:1px solid #a8a8a8"></div>
<svg style="left:103px;top:917px" width="9" height="9" viewBox="0 0 9 9"><path d="M1 3.500l2.500 2.500L8 1.200" fill="none" stroke="#b0b0b0" stroke-width="2"/></svg>
<div style="left:136px;top:916px;width:11px;height:11px;background:#fff;border:1px solid #a0a0a0"></div>
<svg style="left:137px;top:917px" width="9" height="9" viewBox="0 0 9 9"><path d="M1 3.500l2.500 2.500L8 1.200" fill="none" stroke="#000" stroke-width="2"/></svg>
<span class="t" style="left:166px;top:916px;">01.7.07.13-0001</span>
<span class="t" style="left:296px;top:916px;width:224px;overflow:hidden">Мука андезитовая кислотоупорная, марка А</span>
<span class="t" style="left:523px;top:916px;">т</span>
<span class="t" style="left:574px;top:916px;">0,0045</span>
<span class="t" style="left:696px;top:916px;">0,0045</span>
<span class="t" style="left:757px;top:916px;">0,00036</span>
<span class="t" style="left:818px;top:916px;">10 415,31</span>
<span class="t" style="left:879px;top:916px;">0</span>
<span class="t" style="left:940px;top:916px;">46,87</span>
<span class="t" style="left:998px;width:62px;top:916px;text-align:center;">0,31%</span>
<span class="t" style="left:1062px;top:916px;">10 415,31</span>
<span class="t" style="left:1123px;top:916px;">0</span>
<span class="t" style="left:1184px;top:916px;">10 415,31</span>
<span class="t" style="left:1249px;top:916px;">0</span>
<span class="t" style="left:1314px;top:916px;">46,87</span>
<span class="t" style="left:1372px;width:62px;top:916px;text-align:center;">0,31%</span>
<span class="t" style="left:1436px;top:916px;width:118px;overflow:hidden">ФСБЦ-2022, 01.7.07.13</span>
<span class="t" style="left:1557px;top:916px;">Обычный</span>
<span class="t" style="left:1622px;top:916px;"></span>
<div style="left:54px;top:930px;width:1637px;height:15px;background:#ffe8e6"></div>
<div style="left:42px;top:930px;width:11px;height:15px;background:#f0f0f0"></div>
<div style="left:119px;top:930px;width:44px;height:15px;background:#f6e9e8"></div>
<div style="left:938px;top:930px;width:60px;height:15px;background:#f6e9e8"></div>
<div style="left:1312px;top:930px;width:60px;height:15px;background:#f6e9e8"></div>
<div style="left:1620px;top:930px;width:70px;height:15px;background:#f6e9e8"></div>
<div style="left:999px;top:930px;width:60px;height:15px;background:#fff"></div>
<div style="left:1373px;top:930px;width:60px;height:15px;background:#fff"></div>
<div style="left:41px;top:945px;width:1650px;height:1px;background:#c0c0c0"></div>
<div style="left:41px;top:945px;width:13px;height:1px;background:#808080"></div>
<div style="left:42px;top:930px;width:11px;height:1px;background:#fff"></div>
<svg style="left:77px;top:930px;" width="16" height="16" viewBox="0 0 16 16"><use href="#bricks"/></svg>
<div style="left:102px;top:932px;width:11px;height:11px;background:#fff;border:1px solid #a8a8a8"></div>
<svg style="left:103px;top:933px" width="9" height="9" viewBox="0 0 9 9"><path d="M1 3.500l2.500 2.500L8 1.200" fill="none" stroke="#b0b0b0" stroke-width="2"/></svg>
<div style="left:136px;top:932px;width:11px;height:11px;background:#fff;border:1px solid #a0a0a0"></div>
<svg style="left:137px;top:933px" width="9" height="9" viewBox="0 0 9 9"><path d="M1 3.500l2.500 2.500L8 1.200" fill="none" stroke="#000" stroke-width="2"/></svg>
<span class="t" style="left:166px;top:932px;">01.7.07.21-0001</span>
<span class="t" style="left:296px;top:932px;width:224px;overflow:hidden">Уголь древесный, марка А</span>
<span class="t" style="left:523px;top:932px;">т</span>
<span class="t" style="left:574px;top:932px;">0,146</span>
<span class="t" style="left:696px;top:932px;">0,146</span>
<span class="t" style="left:757px;top:932px;">0,01168</span>
<span class="t" style="left:818px;top:932px;">12 720,38</span>
<span class="t" style="left:879px;top:932px;">0</span>
<span class="t" style="left:940px;top:932px;">1 857,18</span>
<div style="left:1001px;top:932px;width:7px;height:11px;background:#b4b4c8"></div>
<span class="t" style="left:998px;width:62px;top:932px;text-align:center;">12,27%</span>
<span class="t" style="left:1062px;top:932px;">12 720,38</span>
<span class="t" style="left:1123px;top:932px;">0</span>
<span class="t" style="left:1184px;top:932px;">12 720,38</span>
<span class="t" style="left:1249px;top:932px;">0</span>
<span class="t" style="left:1314px;top:932px;">1 857,18</span>
<div style="left:1375px;top:932px;width:7px;height:11px;background:#b4b4c8"></div>
<span class="t" style="left:1372px;width:62px;top:932px;text-align:center;">12,27%</span>
<span class="t" style="left:1436px;top:932px;width:118px;overflow:hidden">ФСБЦ-2022, 01.7.07.21</span>
<span class="t" style="left:1557px;top:932px;">Обычный</span>
<span class="t" style="left:1622px;top:932px;"></span>
<div style="left:54px;top:946px;width:1637px;height:15px;background:#ffe8e6"></div>
<div style="left:42px;top:946px;width:11px;height:15px;background:#f0f0f0"></div>
<div style="left:119px;top:946px;width:44px;height:15px;background:#f6e9e8"></div>
<div style="left:938px;top:946px;width:60px;height:15px;background:#f6e9e8"></div>
<div style="left:1312px;top:946px;width:60px;height:15px;background:#f6e9e8"></div>
<div style="left:1620px;top:946px;width:70px;height:15px;background:#f6e9e8"></div>
<div style="left:999px;top:946px;width:60px;height:15px;background:#fff"></div>
<div style="left:1373px;top:946px;width:60px;height:15px;background:#fff"></div>
<div style="left:41px;top:961px;width:1650px;height:1px;background:#c0c0c0"></div>
<div style="left:41px;top:961px;width:13px;height:1px;background:#808080"></div>
<div style="left:42px;top:946px;width:11px;height:1px;background:#fff"></div>
<svg style="left:77px;top:946px;" width="16" height="16" viewBox="0 0 16 16"><use href="#bricks"/></svg>
<div style="left:102px;top:948px;width:11px;height:11px;background:#fff;border:1px solid #a8a8a8"></div>
<div style="left:136px;top:948px;width:11px;height:11px;background:#fff;border:1px solid #a0a0a0"></div>
<svg style="left:137px;top:949px" width="9" height="9" viewBox="0 0 9 9"><path d="M1 3.500l2.500 2.500L8 1.200" fill="none" stroke="#000" stroke-width="2"/></svg>
<span class="t" style="left:166px;top:948px;">01.7.10.03</span>
<span class="t" style="left:296px;top:948px;width:224px;overflow:hidden">Изделия из натурального камня</span>
<span class="t" style="left:523px;top:948px;">м2</span>
<span class="t" style="left:574px;top:948px;">100</span>
<span class="t" style="left:696px;top:948px;">100</span>
<span class="t" style="left:757px;top:948px;">8</span>
<span class="t" style="left:818px;top:948px;">0</span>
<span class="t" style="left:879px;top:948px;">0</span>
<span class="t" style="left:940px;top:948px;">0</span>
<span class="t" style="left:998px;width:62px;top:948px;text-align:center;">0%</span>
<span class="t" style="left:1062px;top:948px;">0</span>
<span class="t" style="left:1123px;top:948px;">0</span>
<span class="t" style="left:1184px;top:948px;">0</span>
<span class="t" style="left:1249px;top:948px;">0</span>
<span class="t" style="left:1314px;top:948px;">0</span>
<span class="t" style="left:1372px;width:62px;top:948px;text-align:center;">0%</span>
<span class="t" style="left:1436px;top:948px;width:118px;overflow:hidden">[Уровень цен]: цена - б.</span>
<span class="t" style="left:1557px;top:948px;">Обычный</span>
<span class="t" style="left:1622px;top:948px;"></span>
<div style="left:54px;top:962px;width:1637px;height:15px;background:#ffe8e6"></div>
<div style="left:42px;top:962px;width:11px;height:15px;background:#f0f0f0"></div>
<div style="left:119px;top:962px;width:44px;height:15px;background:#f6e9e8"></div>
<div style="left:938px;top:962px;width:60px;height:15px;background:#f6e9e8"></div>
<div style="left:1312px;top:962px;width:60px;height:15px;background:#f6e9e8"></div>
<div style="left:1620px;top:962px;width:70px;height:15px;background:#f6e9e8"></div>
<div style="left:999px;top:962px;width:60px;height:15px;background:#fff"></div>
<div style="left:1373px;top:962px;width:60px;height:15px;background:#fff"></div>
<div style="left:41px;top:977px;width:1650px;height:1px;background:#c0c0c0"></div>
<div style="left:41px;top:977px;width:13px;height:1px;background:#808080"></div>
<div style="left:42px;top:962px;width:11px;height:1px;background:#fff"></div>
<svg style="left:77px;top:962px;" width="16" height="16" viewBox="0 0 16 16"><use href="#bricks"/></svg>
<div style="left:102px;top:964px;width:11px;height:11px;background:#fff;border:1px solid #a8a8a8"></div>
<svg style="left:103px;top:965px" width="9" height="9" viewBox="0 0 9 9"><path d="M1 3.500l2.500 2.500L8 1.200" fill="none" stroke="#b0b0b0" stroke-width="2"/></svg>
<div style="left:136px;top:964px;width:11px;height:11px;background:#fff;border:1px solid #a0a0a0"></div>
<svg style="left:137px;top:965px" width="9" height="9" viewBox="0 0 9 9"><path d="M1 3.500l2.500 2.500L8 1.200" fill="none" stroke="#000" stroke-width="2"/></svg>
<span class="t" style="left:166px;top:964px;">01.7.17.05-0021</span>
<span class="t" style="left:296px;top:964px;width:224px;overflow:hidden">Карборунд</span>
<span class="t" style="left:523px;top:964px;">кг</span>
<span class="t" style="left:574px;top:964px;">59,2</span>
<span class="t" style="left:696px;top:964px;">59,2</span>
<span class="t" style="left:757px;top:964px;">4,736</span>
<span class="t" style="left:818px;top:964px;">170,43</span>
<span class="t" style="left:879px;top:964px;">0</span>
<span class="t" style="left:940px;top:964px;">10 089,46</span>
<div style="left:1001px;top:964px;width:37px;height:11px;background:#b4b4c8"></div>
<span class="t" style="left:998px;width:62px;top:964px;text-align:center;">66,64%</span>
<span class="t" style="left:1062px;top:964px;">170,43</span>
<span class="t" style="left:1123px;top:964px;">0</span>
<span class="t" style="left:1184px;top:964px;">170,43</span>
<span class="t" style="left:1249px;top:964px;">0</span>
<span class="t" style="left:1314px;top:964px;">10 089,46</span>
<div style="left:1375px;top:964px;width:37px;height:11px;background:#b4b4c8"></div>
<span class="t" style="left:1372px;width:62px;top:964px;text-align:center;">66,64%</span>
<span class="t" style="left:1436px;top:964px;width:118px;overflow:hidden">ФСБЦ-2022, 01.7.17.05</span>
<span class="t" style="left:1557px;top:964px;">Обычный</span>
<span class="t" style="left:1622px;top:964px;"></span>
<div style="left:54px;top:978px;width:1637px;height:15px;background:#ffe8e6"></div>
<div style="left:42px;top:978px;width:11px;height:15px;background:#f0f0f0"></div>
<div style="left:119px;top:978px;width:44px;height:15px;background:#f6e9e8"></div>
<div style="left:938px;top:978px;width:60px;height:15px;background:#f6e9e8"></div>
<div style="left:1312px;top:978px;width:60px;height:15px;background:#f6e9e8"></div>
<div style="left:1620px;top:978px;width:70px;height:15px;background:#f6e9e8"></div>
<div style="left:999px;top:978px;width:60px;height:15px;background:#fff"></div>
<div style="left:1373px;top:978px;width:60px;height:15px;background:#fff"></div>
<div style="left:41px;top:993px;width:1650px;height:1px;background:#c0c0c0"></div>
<div style="left:41px;top:993px;width:13px;height:1px;background:#808080"></div>
<div style="left:42px;top:978px;width:11px;height:1px;background:#fff"></div>
<svg style="left:77px;top:978px;" width="16" height="16" viewBox="0 0 16 16"><use href="#bricks"/></svg>
<div style="left:102px;top:980px;width:11px;height:11px;background:#fff;border:1px solid #a8a8a8"></div>
<svg style="left:103px;top:981px" width="9" height="9" viewBox="0 0 9 9"><path d="M1 3.500l2.500 2.500L8 1.200" fill="none" stroke="#b0b0b0" stroke-width="2"/></svg>
<div style="left:136px;top:980px;width:11px;height:11px;background:#fff;border:1px solid #a0a0a0"></div>
<svg style="left:137px;top:981px" width="9" height="9" viewBox="0 0 9 9"><path d="M1 3.500l2.500 2.500L8 1.200" fill="none" stroke="#000" stroke-width="2"/></svg>
<span class="t" style="left:166px;top:980px;">01.7.17.08-0032</span>
<span class="t" style="left:296px;top:980px;width:224px;overflow:hidden">Порошок полирующий</span>
<span class="t" style="left:523px;top:980px;">кг</span>
<span class="t" style="left:574px;top:980px;">0,12</span>
<span class="t" style="left:696px;top:980px;">0,12</span>
<span class="t" style="left:757px;top:980px;">0,0096</span>
<span class="t" style="left:818px;top:980px;">796,66</span>
<span class="t" style="left:879px;top:980px;">0</span>
<span class="t" style="left:940px;top:980px;">95,6</span>
<span class="t" style="left:998px;width:62px;top:980px;text-align:center;">0,63%</span>
<span class="t" style="left:1062px;top:980px;">796,66</span>
<span class="t" style="left:1123px;top:980px;">0</span>
<span class="t" style="left:1184px;top:980px;">796,66</span>
<span class="t" style="left:1249px;top:980px;">0</span>
<span class="t" style="left:1314px;top:980px;">95,6</span>
<span class="t" style="left:1372px;width:62px;top:980px;text-align:center;">0,63%</span>
<span class="t" style="left:1436px;top:980px;width:118px;overflow:hidden">ФСБЦ-2022, 01.7.17.08</span>
<span class="t" style="left:1557px;top:980px;">Обычный</span>
<span class="t" style="left:1622px;top:980px;"></span>
<div style="left:54px;top:994px;width:1637px;height:15px;background:#ffe8e6"></div>
<div style="left:42px;top:994px;width:11px;height:15px;background:#f0f0f0"></div>
<div style="left:119px;top:994px;width:44px;height:15px;background:#f6e9e8"></div>
<div style="left:938px;top:994px;width:60px;height:15px;background:#f6e9e8"></div>
<div style="left:1312px;top:994px;width:60px;height:15px;background:#f6e9e8"></div>
<div style="left:1620px;top:994px;width:70px;height:15px;background:#f6e9e8"></div>
<div style="left:999px;top:994px;width:60px;height:15px;background:#fff"></div>
<div style="left:1373px;top:994px;width:60px;height:15px;background:#fff"></div>
<div style="left:41px;top:1009px;width:1650px;height:1px;background:#c0c0c0"></div>
<div style="left:41px;top:1009px;width:13px;height:1px;background:#808080"></div>
<div style="left:42px;top:994px;width:11px;height:1px;background:#fff"></div>
<svg style="left:77px;top:994px;" width="16" height="16" viewBox="0 0 16 16"><use href="#bricks"/></svg>
<div style="left:102px;top:996px;width:11px;height:11px;background:#fff;border:1px solid #a8a8a8"></div>
<div style="left:136px;top:996px;width:11px;height:11px;background:#fff;border:1px solid #a0a0a0"></div>
<svg style="left:137px;top:997px" width="9" height="9" viewBox="0 0 9 9"><path d="M1 3.500l2.500 2.500L8 1.200" fill="none" stroke="#000" stroke-width="2"/></svg>
<span class="t" style="left:166px;top:996px;">04.3.01.09</span>
<span class="t" style="left:296px;top:996px;width:224px;overflow:hidden">Раствор готовый отделочный</span>
<span class="t" style="left:523px;top:996px;">м3</span>
<span class="t" style="left:574px;top:996px;">3,5</span>
<span class="t" style="left:696px;top:996px;">3,5</span>
<span class="t" style="left:757px;top:996px;">0,28</span>
<span class="t" style="left:818px;top:996px;">0</span>
<span class="t" style="left:879px;top:996px;">0</span>
<span class="t" style="left:940px;top:996px;">0</span>
<span class="t" style="left:998px;width:62px;top:996px;text-align:center;">0%</span>
<span class="t" style="left:1062px;top:996px;">0</span>
<span class="t" style="left:1123px;top:996px;">0</span>
<span class="t" style="left:1184px;top:996px;">0</span>
<span class="t" style="left:1249px;top:996px;">0</span>
<span class="t" style="left:1314px;top:996px;">0</span>
<span class="t" style="left:1372px;width:62px;top:996px;text-align:center;">0%</span>
<span class="t" style="left:1436px;top:996px;width:118px;overflow:hidden">[Уровень цен]: цена - б.</span>
<span class="t" style="left:1557px;top:996px;">Обычный</span>
<span class="t" style="left:1622px;top:996px;"></span>
<div style="left:54px;top:1010px;width:1637px;height:15px;background:#ffe8e6"></div>
<div style="left:42px;top:1010px;width:11px;height:15px;background:#f0f0f0"></div>
<div style="left:119px;top:1010px;width:44px;height:15px;background:#f6e9e8"></div>
<div style="left:938px;top:1010px;width:60px;height:15px;background:#f6e9e8"></div>
<div style="left:1312px;top:1010px;width:60px;height:15px;background:#f6e9e8"></div>
<div style="left:1620px;top:1010px;width:70px;height:15px;background:#f6e9e8"></div>
<div style="left:999px;top:1010px;width:60px;height:15px;background:#fff"></div>
<div style="left:1373px;top:1010px;width:60px;height:15px;background:#fff"></div>
<div style="left:41px;top:1025px;width:1650px;height:1px;background:#c0c0c0"></div>
<div style="left:41px;top:1025px;width:13px;height:1px;background:#808080"></div>
<div style="left:42px;top:1010px;width:11px;height:1px;background:#fff"></div>
<svg style="left:77px;top:1010px;" width="16" height="16" viewBox="0 0 16 16"><use href="#bricks"/></svg>
<div style="left:102px;top:1012px;width:11px;height:11px;background:#fff;border:1px solid #a8a8a8"></div>
<div style="left:136px;top:1012px;width:11px;height:11px;background:#fff;border:1px solid #a0a0a0"></div>
<svg style="left:137px;top:1013px" width="9" height="9" viewBox="0 0 9 9"><path d="M1 3.500l2.500 2.500L8 1.200" fill="none" stroke="#000" stroke-width="2"/></svg>
<span class="t" style="left:166px;top:1012px;">08.1.02.25</span>
<span class="t" style="left:296px;top:1012px;width:224px;overflow:hidden">Детали крепления</span>
<span class="t" style="left:523px;top:1012px;">т</span>
<span class="t" style="left:574px;top:1012px;">0</span>
<span class="t" style="left:696px;top:1012px;">0</span>
<span class="t" style="left:757px;top:1012px;">0</span>
<span class="t" style="left:818px;top:1012px;">0</span>
<span class="t" style="left:879px;top:1012px;">0</span>
<span class="t" style="left:940px;top:1012px;">0</span>
<span class="t" style="left:998px;width:62px;top:1012px;text-align:center;">0%</span>
<span class="t" style="left:1062px;top:1012px;">0</span>
<span class="t" style="left:1123px;top:1012px;">0</span>
<span class="t" style="left:1184px;top:1012px;">0</span>
<span class="t" style="left:1249px;top:1012px;">0</span>
<span class="t" style="left:1314px;top:1012px;">0</span>
<span class="t" style="left:1372px;width:62px;top:1012px;text-align:center;">0%</span>
<span class="t" style="left:1436px;top:1012px;width:118px;overflow:hidden">[Уровень цен]: цена - б.</span>
<span class="t" style="left:1557px;top:1012px;">Проектный</span>
<span class="t" style="left:1622px;top:1012px;"></span>
<div style="left:54px;top:1026px;width:1637px;height:15px;background:#ffe8e6"></div>
<div style="left:42px;top:1026px;width:11px;height:15px;background:#f0f0f0"></div>
<div style="left:119px;top:1026px;width:44px;height:15px;background:#f6e9e8"></div>
<div style="left:938px;top:1026px;width:60px;height:15px;background:#f6e9e8"></div>
<div style="left:1312px;top:1026px;width:60px;height:15px;background:#f6e9e8"></div>
<div style="left:1620px;top:1026px;width:70px;height:15px;background:#f6e9e8"></div>
<div style="left:999px;top:1026px;width:60px;height:15px;background:#fff"></div>
<div style="left:1373px;top:1026px;width:60px;height:15px;background:#fff"></div>
<div style="left:41px;top:1041px;width:1650px;height:1px;background:#c0c0c0"></div>
<div style="left:41px;top:1041px;width:13px;height:1px;background:#808080"></div>
<div style="left:42px;top:1026px;width:11px;height:1px;background:#fff"></div>
<svg style="left:77px;top:1026px;" width="16" height="16" viewBox="0 0 16 16"><use href="#bricks"/></svg>
<div style="left:102px;top:1028px;width:11px;height:11px;background:#fff;border:1px solid #a8a8a8"></div>
<svg style="left:103px;top:1029px" width="9" height="9" viewBox="0 0 9 9"><path d="M1 3.500l2.500 2.500L8 1.200" fill="none" stroke="#b0b0b0" stroke-width="2"/></svg>
<div style="left:136px;top:1028px;width:11px;height:11px;background:#fff;border:1px solid #a0a0a0"></div>
<svg style="left:137px;top:1029px" width="9" height="9" viewBox="0 0 9 9"><path d="M1 3.500l2.500 2.500L8 1.200" fill="none" stroke="#000" stroke-width="2"/></svg>
<span class="t" style="left:166px;top:1028px;">11.1.03.05-0064</span>
<span class="t" style="left:296px;top:1028px;width:224px;overflow:hidden">Доска необрезная хвойных пород, естестве</span>
<span class="t" style="left:523px;top:1028px;">м3</span>
<span class="t" style="left:574px;top:1028px;">0,0452</span>
<span class="t" style="left:696px;top:1028px;">0,0452</span>
<span class="t" style="left:757px;top:1028px;">0,003616</span>
<span class="t" style="left:818px;top:1028px;">7 555</span>
<span class="t" style="left:879px;top:1028px;">0</span>
<span class="t" style="left:940px;top:1028px;">341,49</span>
<div style="left:1001px;top:1028px;width:1px;height:11px;background:#b4b4c8"></div>
<span class="t" style="left:998px;width:62px;top:1028px;text-align:center;">2,26%</span>
<span class="t" style="left:1062px;top:1028px;">7 555</span>
<span class="t" style="left:1123px;top:1028px;">0</span>
<span class="t" style="left:1184px;top:1028px;">7 555</span>
<span class="t" style="left:1249px;top:1028px;">0</span>
<span class="t" style="left:1314px;top:1028px;">341,49</span>
<div style="left:1375px;top:1028px;width:1px;height:11px;background:#b4b4c8"></div>
<span class="t" style="left:1372px;width:62px;top:1028px;text-align:center;">2,26%</span>
<span class="t" style="left:1436px;top:1028px;width:118px;overflow:hidden">ФСБЦ-2022, 11.1.03.05</span>
<span class="t" style="left:1557px;top:1028px;">Обычный</span>
<span class="t" style="left:1622px;top:1028px;"></span>
<div style="left:54px;top:802px;width:20px;height:15px;background:#a0a0a0"></div>
<svg style="left:44px;top:804px" width="6" height="11"><path d="M0 0l6 5.500-6 5.500z" fill="#000"/></svg>
<div style="left:41px;top:802px;width:1px;height:240px;background:#808080"></div>
<div style="left:53px;top:802px;width:1px;height:240px;background:#808080"></div>
<div style="left:74px;top:802px;width:1px;height:240px;background:#c0c0c0"></div>
<div style="left:95px;top:802px;width:1px;height:240px;background:#c0c0c0"></div>
<div style="left:118px;top:802px;width:1px;height:240px;background:#c0c0c0"></div>
<div style="left:41px;top:802px;width:1px;height:240px;background:#808080"></div>
<div style="left:53px;top:802px;width:1px;height:240px;background:#808080"></div>
<div style="left:163px;top:802px;width:1px;height:240px;background:#c0c0c0"></div>
<div style="left:293px;top:802px;width:1px;height:240px;background:#c0c0c0"></div>
<div style="left:520px;top:802px;width:1px;height:240px;background:#c0c0c0"></div>
<div style="left:571px;top:802px;width:1px;height:240px;background:#c0c0c0"></div>
<div style="left:632px;top:802px;width:1px;height:240px;background:#c0c0c0"></div>
<div style="left:693px;top:802px;width:1px;height:240px;background:#c0c0c0"></div>
<div style="left:754px;top:802px;width:1px;height:240px;background:#c0c0c0"></div>
<div style="left:815px;top:802px;width:1px;height:240px;background:#c0c0c0"></div>
<div style="left:876px;top:802px;width:1px;height:240px;background:#c0c0c0"></div>
<div style="left:937px;top:802px;width:1px;height:240px;background:#c0c0c0"></div>
<div style="left:998px;top:802px;width:1px;height:240px;background:#c0c0c0"></div>
<div style="left:1059px;top:802px;width:1px;height:240px;background:#c0c0c0"></div>
<div style="left:1120px;top:802px;width:1px;height:240px;background:#c0c0c0"></div>
<div style="left:1181px;top:802px;width:1px;height:240px;background:#c0c0c0"></div>
<div style="left:1246px;top:802px;width:1px;height:240px;background:#c0c0c0"></div>
<div style="left:1311px;top:802px;width:1px;height:240px;background:#c0c0c0"></div>
<div style="left:1372px;top:802px;width:1px;height:240px;background:#c0c0c0"></div>
<div style="left:1433px;top:802px;width:1px;height:240px;background:#c0c0c0"></div>
<div style="left:1554px;top:802px;width:1px;height:240px;background:#c0c0c0"></div>
<div style="left:1619px;top:802px;width:1px;height:240px;background:#c0c0c0"></div>
<div style="left:1690px;top:802px;width:1px;height:240px;background:#c0c0c0"></div>
<div style="left:1740px;top:752px;width:16px;height:293px;background:#f0f0f0"></div>
<div style="left:1740px;top:770px;width:15px;height:129px;background:#cdcdcd"></div>
<svg style="left:1743px;top:757px" width="10" height="10" viewBox="0 0 10 10"><path d="M1.500 6.500l3.500-3.500 3.500 3.500" fill="none" stroke="#505050" stroke-width="1.900"/></svg>
<svg style="left:1743px;top:1032px" width="10" height="10" viewBox="0 0 10 10"><path d="M1.500 3l3.500 3.500 3.500-3.500" fill="none" stroke="#505050" stroke-width="1.900"/></svg>
<div class="sk" style="left:14px;top:1048px;width:95px;height:17px;"></div>
<span class="t" style="left:20px;top:1050px;">Уровень цен</span>
<div class="sk" style="left:111px;top:1048px;width:122px;height:17px;"></div>
<svg style="left:115px;top:1048px;" width="16" height="16" viewBox="0 0 16 16"><use href="#worker"/></svg>
<span class="t" style="left:135px;top:1050px;">Стоимость = 0,00р</span>
<div class="sk" style="left:235px;top:1048px;width:134px;height:17px;"></div>
<svg style="left:239px;top:1048px;" width="16" height="16" viewBox="0 0 16 16"><use href="#truck"/></svg>
<span class="t" style="left:259px;top:1050px;">Стоимость = 980,81р</span>
<div class="sk" style="left:371px;top:1048px;width:1386px;height:17px;"></div>
<svg style="left:375px;top:1048px;" width="16" height="16" viewBox="0 0 16 16"><use href="#bricks"/></svg>
<span class="t" style="left:395px;top:1050px;">Стоимость = 15 139,75р</span>
<div class="sk" style="left:14px;top:1067px;width:95px;height:17px;"></div>
<span class="t" style="left:20px;top:1069px;">Уровень цен</span>
<div class="sk" style="left:111px;top:1067px;width:122px;height:17px;"></div>
<svg style="left:115px;top:1067px;" width="16" height="16" viewBox="0 0 16 16"><use href="#worker"/></svg>
<span class="t" style="left:135px;top:1069px;">Стоимость = 0,00р</span>
<div class="sk" style="left:235px;top:1067px;width:134px;height:17px;"></div>
<svg style="left:239px;top:1067px;" width="16" height="16" viewBox="0 0 16 16"><use href="#truck"/></svg>
<span class="t" style="left:259px;top:1069px;">Стоимость = 980,81р</span>
<div class="sk" style="left:371px;top:1067px;width:1386px;height:17px;"></div>
<svg style="left:375px;top:1067px;" width="16" height="16" viewBox="0 0 16 16"><use href="#bricks"/></svg>
<span class="t" style="left:395px;top:1069px;">Стоимость = 15 139,75р</span>
<div style="left:12px;top:1085px;width:1745px;height:1px;background:#a0a0a0"></div>
<div style="left:2px;top:1086px;width:1755px;height:1px;background:#fff"></div>
<div class="sk" style="left:3px;top:1090px;width:87px;height:26px;"></div>
<div class="sk" style="left:92px;top:1090px;width:298px;height:26px;"></div>
<div class="sk" style="left:392px;top:1090px;width:1296px;height:26px;"></div>
<div class="sk" style="left:1690px;top:1090px;width:32px;height:26px;"></div>
<div class="sk" style="left:1724px;top:1090px;width:31px;height:26px;"></div>
<span class="m" style="left:398px;top:1096px;font-size:11.5px">ИТОГО (руб)&nbsp;&nbsp;По ЛС: 10 080,86 / 0&nbsp;&nbsp;&nbsp;&nbsp;&nbsp;По объекту: 10 080,86 / 0</span>
<svg style="left:1698px;top:1094px;" width="17" height="17" viewBox="0 0 17 17"><use href="#nosnd"/></svg>
<span class="t" style="left:1732px;top:1097px;">RU</span>
<div style="left:0px;top:1117px;width:1759px;height:1px;background:#fff"></div>
<div style="left:0px;top:1118px;width:1759px;height:1px;background:#909090"></div>
<div style="left:0px;top:1119px;width:1759px;height:1px;background:#808080"></div>
<div style="left:0px;top:0px;width:1759px;height:1px;background:#808080"></div>
<div style="left:1px;top:1px;width:1757px;height:1px;background:#fff"></div>
<div style="left:6px;top:2px;width:2px;height:20px;background:#fff"></div>
<div style="left:8px;top:2px;width:1px;height:21px;background:#a0a0a0"></div>
<div style="left:7px;top:22px;width:2px;height:1px;background:#a0a0a0"></div>
<div style="left:9px;top:2px;width:2px;height:20px;background:#fff"></div>
<div style="left:11px;top:2px;width:1px;height:21px;background:#a0a0a0"></div>
<div style="left:10px;top:22px;width:2px;height:1px;background:#a0a0a0"></div>
<span class="m" style="left:35px;top:6px;"><u>С</u>мета</span>
<span class="m" style="left:81px;top:6px;">Работа</span>
<span class="m" style="left:131px;top:6px;">Информация</span>
<span class="m" style="left:217px;top:6px;">Справочники</span>
<span class="m" style="left:304px;top:6px;">Настройки</span>
<span class="m" style="left:376px;top:6px;">Отдохнуть</span>
<span class="m" style="left:445px;top:6px;">Окно</span>
<span class="m" style="left:485px;top:6px;">Помощь</span>
<span class="m" style="left:707px;top:6px;">Структурные справочники</span>
<div style="left:542px;top:3px;width:161px;height:20px;border:1px solid #1cc4f6;background:#fff;box-shadow:inset 0 0 0 1px rgba(28,196,246,.25)"></div>
<svg style="left:547px;top:5px;" width="16" height="16" viewBox="0 0 16 16"><use href="#cloud"/></svg>
<span class="m" style="left:567px;top:4px;font-size:14.7px;line-height:19px;color:#1cc0f4">Информатор счета</span>
<div class="rs" style="left:1703px;top:5px;width:16px;height:15px;"></div>
<div class="rs" style="left:1720px;top:5px;width:16px;height:15px;"></div>
<div class="rs" style="left:1739px;top:5px;width:16px;height:15px;"></div>
<div style="left:1707px;top:15px;width:7px;height:2px;background:#000"></div>
<div style="left:1726px;top:8px;width:7px;height:6px;border:1px solid #000;border-top-width:2px"></div>
<div style="left:1723px;top:11px;width:7px;height:6px;border:1px solid #000;border-top-width:2px;background:#f0f0f0"></div>
<svg style="left:1742px;top:8px" width="10" height="9" viewBox="0 0 10 9"><path d="M1 .5l8 8M9 .5l-8 8" stroke="#000" stroke-width="2.200"/></svg>
<div style="left:0px;top:24px;width:1757px;height:1px;background:#a0a0a0"></div>
<div style="left:0px;top:25px;width:1757px;height:1px;background:#fff"></div>
<div style="left:151px;top:25px;width:1px;height:25px;background:#a0a0a0"></div>
<div style="left:152px;top:26px;width:1px;height:24px;background:#fff"></div>
<div style="left:928px;top:25px;width:1px;height:25px;background:#a0a0a0"></div>
<div style="left:929px;top:26px;width:1px;height:24px;background:#fff"></div>
<div style="left:1062px;top:25px;width:1px;height:25px;background:#a0a0a0"></div>
<div style="left:1063px;top:26px;width:1px;height:24px;background:#fff"></div>
<div style="left:1167px;top:25px;width:1px;height:25px;background:#a0a0a0"></div>
<div style="left:1168px;top:26px;width:1px;height:24px;background:#fff"></div>
<div style="left:1278px;top:25px;width:1px;height:25px;background:#a0a0a0"></div>
<div style="left:1279px;top:26px;width:1px;height:24px;background:#fff"></div>
<div style="left:1337px;top:25px;width:1px;height:25px;background:#a0a0a0"></div>
<div style="left:1338px;top:26px;width:1px;height:24px;background:#fff"></div>
<div style="left:0px;top:50px;width:1338px;height:1px;background:#a0a0a0"></div>
<div style="left:0px;top:51px;width:1338px;height:1px;background:#fff"></div>
<div style="left:892px;top:25px;width:1px;height:25px;background:#a0a0a0"></div>
<div style="left:893px;top:26px;width:1px;height:24px;background:#fff"></div>
<div style="left:6px;top:27px;width:2px;height:21px;background:#fff"></div>
<div style="left:8px;top:27px;width:1px;height:22px;background:#a0a0a0"></div>
<div style="left:7px;top:48px;width:2px;height:1px;background:#a0a0a0"></div>
<div style="left:9px;top:27px;width:2px;height:21px;background:#fff"></div>
<div style="left:11px;top:27px;width:1px;height:22px;background:#a0a0a0"></div>
<div style="left:10px;top:48px;width:2px;height:1px;background:#a0a0a0"></div>
<div style="left:152px;top:27px;width:2px;height:21px;background:#fff"></div>
<div style="left:154px;top:27px;width:1px;height:22px;background:#a0a0a0"></div>
<div style="left:153px;top:48px;width:2px;height:1px;background:#a0a0a0"></div>
<div style="left:155px;top:27px;width:2px;height:21px;background:#fff"></div>
<div style="left:157px;top:27px;width:1px;height:22px;background:#a0a0a0"></div>
<div style="left:156px;top:48px;width:2px;height:1px;background:#a0a0a0"></div>
<div style="left:897px;top:27px;width:2px;height:21px;background:#fff"></div>
<div style="left:899px;top:27px;width:1px;height:22px;background:#a0a0a0"></div>
<div style="left:898px;top:48px;width:2px;height:1px;background:#a0a0a0"></div>
<div style="left:900px;top:27px;width:2px;height:21px;background:#fff"></div>
<div style="left:902px;top:27px;width:1px;height:22px;background:#a0a0a0"></div>
<div style="left:901px;top:48px;width:2px;height:1px;background:#a0a0a0"></div>
<div style="left:933px;top:27px;width:2px;height:21px;background:#fff"></div>
<div style="left:935px;top:27px;width:1px;height:22px;background:#a0a0a0"></div>
<div style="left:934px;top:48px;width:2px;height:1px;background:#a0a0a0"></div>
<div style="left:936px;top:27px;width:2px;height:21px;background:#fff"></div>
<div style="left:938px;top:27px;width:1px;height:22px;background:#a0a0a0"></div>
<div style="left:937px;top:48px;width:2px;height:1px;background:#a0a0a0"></div>
<div style="left:1067px;top:27px;width:2px;height:21px;background:#fff"></div>
<div style="left:1069px;top:27px;width:1px;height:22px;background:#a0a0a0"></div>
<div style="left:1068px;top:48px;width:2px;height:1px;background:#a0a0a0"></div>
<div style="left:1070px;top:27px;width:2px;height:21px;background:#fff"></div>
<div style="left:1072px;top:27px;width:1px;height:22px;background:#a0a0a0"></div>
<div style="left:1071px;top:48px;width:2px;height:1px;background:#a0a0a0"></div>
<div style="left:1172px;top:27px;width:2px;height:21px;background:#fff"></div>
<div style="left:1174px;top:27px;width:1px;height:22px;background:#a0a0a0"></div>
<div style="left:1173px;top:48px;width:2px;height:1px;background:#a0a0a0"></div>
<div style="left:1175px;top:27px;width:2px;height:21px;background:#fff"></div>
<div style="left:1177px;top:27px;width:1px;height:22px;background:#a0a0a0"></div>
<div style="left:1176px;top:48px;width:2px;height:1px;background:#a0a0a0"></div>
<div style="left:1283px;top:27px;width:2px;height:21px;background:#fff"></div>
<div style="left:1285px;top:27px;width:1px;height:22px;background:#a0a0a0"></div>
<div style="left:1284px;top:48px;width:2px;height:1px;background:#a0a0a0"></div>
<div style="left:1286px;top:27px;width:2px;height:21px;background:#fff"></div>
<div style="left:1288px;top:27px;width:1px;height:22px;background:#a0a0a0"></div>
<div style="left:1287px;top:48px;width:2px;height:1px;background:#a0a0a0"></div>
<svg style="left:16px;top:30px;" width="16" height="16" viewBox="0 0 16 16"><use href="#tree"/></svg>
<svg style="left:39px;top:30px;" width="16" height="16" viewBox="0 0 16 16"><use href="#tree2"/></svg>
<svg style="left:68px;top:30px;" width="16" height="16" viewBox="0 0 16 16"><use href="#excel"/></svg>
<svg style="left:97px;top:30px;" width="16" height="16" viewBox="0 0 16 16"><use href="#pdf"/></svg>
<svg style="left:125px;top:30px;" width="16" height="16" viewBox="0 0 16 16"><use href="#mag"/></svg>
<svg style="left:162px;top:30px;" width="16" height="16" viewBox="0 0 16 16"><use href="#save"/></svg>
<svg style="left:185px;top:30px;" width="16" height="16" viewBox="0 0 16 16"><use href="#refresh"/></svg>
<svg style="left:208px;top:30px;" width="16" height="16" viewBox="0 0 16 16"><use href="#undo"/></svg>
<svg style="left:238px;top:30px;" width="16" height="16" viewBox="0 0 16 16"><use href="#redo"/></svg>
<svg style="left:266px;top:30px;" width="16" height="16" viewBox="0 0 16 16"><use href="#hammerb"/></svg>
<svg style="left:289px;top:30px;" width="16" height="16" viewBox="0 0 16 16"><use href="#bricksb"/></svg>
<svg style="left:312px;top:30px;" width="16" height="16" viewBox="0 0 16 16"><use href="#boxb"/></svg>
<svg style="left:335px;top:30px;" width="16" height="16" viewBox="0 0 16 16"><use href="#speechb"/></svg>
<svg style="left:363px;top:30px;" width="18" height="16" viewBox="0 0 18 16"><use href="#gray1"/></svg>
<svg style="left:386px;top:30px;" width="18" height="16" viewBox="0 0 18 16"><use href="#gray2"/></svg>
<svg style="left:551px;top:30px;" width="16" height="16" viewBox="0 0 16 16"><use href="#redx"/></svg>
<svg style="left:580px;top:30px;" width="16" height="16" viewBox="0 0 16 16"><use href="#calc"/></svg>
<svg style="left:603px;top:30px;" width="16" height="16" viewBox="0 0 16 16"><use href="#docpm"/></svg>
<svg style="left:625px;top:30px;" width="16" height="16" viewBox="0 0 16 16"><use href="#plusminus"/></svg>
<svg style="left:654px;top:30px;" width="16" height="16" viewBox="0 0 16 16"><use href="#scis"/></svg>
<svg style="left:677px;top:30px;" width="16" height="16" viewBox="0 0 16 16"><use href="#copyg"/></svg>
<svg style="left:701px;top:30px;" width="16" height="16" viewBox="0 0 16 16"><use href="#pasteg"/></svg>
<svg style="left:848px;top:30px;" width="16" height="16" viewBox="0 0 16 16"><use href="#copy2"/></svg>
<svg style="left:871px;top:30px;" width="16" height="16" viewBox="0 0 16 16"><use href="#paste2"/></svg>
<svg style="left:943px;top:30px;" width="16" height="16" viewBox="0 0 16 16"><use href="#gbook"/></svg>
<svg style="left:966px;top:30px;" width="16" height="16" viewBox="0 0 16 16"><use href="#picon"/></svg>
<svg style="left:989px;top:30px;" width="16" height="16" viewBox="0 0 16 16"><use href="#pricon"/></svg>
<svg style="left:1017px;top:30px;" width="16" height="16" viewBox="0 0 16 16"><use href="#treeed"/></svg>
<svg style="left:1040px;top:30px;" width="18" height="16" viewBox="0 0 18 16"><use href="#treedel"/></svg>
<svg style="left:1077px;top:30px;" width="16" height="16" viewBox="0 0 16 16"><use href="#ind1"/></svg>
<svg style="left:1100px;top:30px;" width="16" height="16" viewBox="0 0 16 16"><use href="#ind2"/></svg>
<svg style="left:1123px;top:30px;" width="16" height="16" viewBox="0 0 16 16"><use href="#ind3"/></svg>
<svg style="left:1146px;top:30px;" width="16" height="16" viewBox="0 0 16 16"><use href="#ind4"/></svg>
<svg style="left:1182px;top:30px;" width="16" height="16" viewBox="0 0 16 16"><use href="#hammer"/></svg>
<svg style="left:1205px;top:30px;" width="16" height="16" viewBox="0 0 16 16"><use href="#truck"/></svg>
<svg style="left:1228px;top:30px;" width="16" height="16" viewBox="0 0 16 16"><use href="#bricks"/></svg>
<svg style="left:1257px;top:30px;" width="16" height="16" viewBox="0 0 16 16"><use href="#truck2"/></svg>
<svg style="left:1293px;top:30px;" width="16" height="16" viewBox="0 0 16 16"><use href="#pbook"/></svg>
<svg style="left:1316px;top:30px;" width="16" height="16" viewBox="0 0 16 16"><use href="#bbook"/></svg>
<div style="left:61px;top:27px;width:1px;height:22px;background:#a0a0a0"></div>
<div style="left:62px;top:27px;width:1px;height:22px;background:#fff"></div>
<div style="left:90px;top:27px;width:1px;height:22px;background:#a0a0a0"></div>
<div style="left:91px;top:27px;width:1px;height:22px;background:#fff"></div>
<div style="left:119px;top:27px;width:1px;height:22px;background:#a0a0a0"></div>
<div style="left:120px;top:27px;width:1px;height:22px;background:#fff"></div>
<div style="left:230px;top:27px;width:1px;height:22px;background:#a0a0a0"></div>
<div style="left:231px;top:27px;width:1px;height:22px;background:#fff"></div>
<div style="left:259px;top:27px;width:1px;height:22px;background:#a0a0a0"></div>
<div style="left:260px;top:27px;width:1px;height:22px;background:#fff"></div>
<div style="left:357px;top:27px;width:1px;height:22px;background:#a0a0a0"></div>
<div style="left:358px;top:27px;width:1px;height:22px;background:#fff"></div>
<div style="left:544px;top:27px;width:1px;height:22px;background:#a0a0a0"></div>
<div style="left:545px;top:27px;width:1px;height:22px;background:#fff"></div>
<div style="left:573px;top:27px;width:1px;height:22px;background:#a0a0a0"></div>
<div style="left:574px;top:27px;width:1px;height:22px;background:#fff"></div>
<div style="left:648px;top:27px;width:1px;height:22px;background:#a0a0a0"></div>
<div style="left:649px;top:27px;width:1px;height:22px;background:#fff"></div>
<div style="left:723px;top:27px;width:1px;height:22px;background:#a0a0a0"></div>
<div style="left:724px;top:27px;width:1px;height:22px;background:#fff"></div>
<div style="left:1011px;top:27px;width:1px;height:22px;background:#a0a0a0"></div>
<div style="left:1012px;top:27px;width:1px;height:22px;background:#fff"></div>
<div style="left:1250px;top:27px;width:1px;height:22px;background:#a0a0a0"></div>
<div style="left:1251px;top:27px;width:1px;height:22px;background:#fff"></div>
<span class="m" style="left:411px;top:31px;">Изменить тип строки...</span>
<span class="m" style="left:731px;top:31px;color:#a8a8a8">Копировать в смету</span>
<div style="left:0px;top:76px;width:1217px;height:1px;background:#a0a0a0"></div>
<div style="left:0px;top:77px;width:1217px;height:1px;background:#fff"></div>
<div style="left:1216px;top:52px;width:1px;height:25px;background:#a0a0a0"></div>
<div style="left:6px;top:53px;width:2px;height:21px;background:#fff"></div>
<div style="left:8px;top:53px;width:1px;height:22px;background:#a0a0a0"></div>
<div style="left:7px;top:74px;width:2px;height:1px;background:#a0a0a0"></div>
<div style="left:9px;top:53px;width:2px;height:21px;background:#fff"></div>
<div style="left:11px;top:53px;width:1px;height:22px;background:#a0a0a0"></div>
<div style="left:10px;top:74px;width:2px;height:1px;background:#a0a0a0"></div>
<span class="m" style="left:17px;top:57px;">Ресурсы</span>
<span class="m" style="left:73px;top:57px;">Панель цен</span>
<span class="m" style="left:146px;top:57px;">Лимит. затраты</span>
<span class="m" style="left:240px;top:57px;">ЭСН</span>
<span class="m" style="left:273px;top:57px;">Состав работ</span>
<span class="m" style="left:355px;top:57px;">Тех. часть</span>
<span class="m" style="left:418px;top:57px;">Индексы</span>
<span class="m" style="left:476px;top:57px;">Конъюнктурный</span>
<span class="m" style="left:641px;top:57px;">Формулы</span>
<span class="m" style="left:704px;top:57px;">Структура</span>
<span class="m" style="left:771px;top:57px;">Список открытых окон</span>
<div class="hat" style="left:575px;top:53px;width:63px;height:23px;box-shadow:inset 1px 1px 0 #a0a0a0,inset -1px -1px 0 #fff"></div>
<span class="m" style="left:578px;top:58px;">Поправки</span>
<svg style="left:903px;top:61px" width="7" height="4"><path d="M0 0h7L3.500 4z" fill="#000"/></svg>
<div style="left:917px;top:55px;width:296px;height:18px;background:#fff"></div>
<div style="left:1199px;top:56px;width:13px;height:16px;background:#f0f0f0"></div>
<svg style="left:1203px;top:62px" width="7" height="4"><path d="M0 0h7L3.500 4z" fill="#000"/></svg>
<span class="m" style="left:919px;top:57px;">Уровень цен/Уровень цен</span>
<div style="left:471px;top:50px;width:104px;height:29px;border:3px solid #ff0000"></div>
<div style="left:0px;top:78px;width:1757px;height:1px;background:#a0a0a0"></div>
<div style="left:0px;top:79px;width:1757px;height:1px;background:#fff"></div>
<div style="left:4px;top:80px;width:118px;height:17px;background:#fff;border:1px solid #606060;box-shadow:inset 1px 1px 0 #a0a0a0"></div>
<span class="t" style="left:7px;top:82px;">ЛС1</span>
<div style="left:182px;top:80px;width:1px;height:18px;background:#a0a0a0"></div>
<div style="left:183px;top:80px;width:1px;height:18px;background:#fff"></div>
<div style="left:0px;top:98px;width:1757px;height:1px;background:#a0a0a0"></div>
<div style="left:0px;top:99px;width:1757px;height:1px;background:#fff"></div>
<div style="left:1716px;top:80px;width:1px;height:18px;background:#fff"></div>
<svg style="left:1720px;top:83px" width="10" height="14" viewBox="0 0 10 14"><path d="M1.500 5L5 1.500 8.500 5M1.500 9L5 12.500 8.500 9" fill="none" stroke="#b8b8b8" stroke-width="1.400"/></svg>
<div style="left:1740px;top:82px;width:15px;height:15px;background:linear-gradient(#f04848,#d01818);border:1px solid #b01010;border-radius:2px"></div>
<svg style="left:1743px;top:85px" width="9" height="9" viewBox="0 0 9 9"><path d="M1.500 1.500l6 6M7.500 1.500l-6 6" stroke="#fff" stroke-width="2"/></svg>
<div style="left:0px;top:0px;width:1px;height:1120px;background:#808080"></div>
<div style="left:1px;top:0px;width:1px;height:1120px;background:#fff"></div>
<div style="left:1756px;top:1px;width:1px;height:1117px;background:#fff"></div>
<div style="left:1757px;top:0px;width:1px;height:1120px;background:#a0a0a0"></div>
<div style="left:1758px;top:0px;width:1px;height:1120px;background:#808080"></div>
<div style="left:427px;top:245px;width:341px;height:458px;background:#f0f0f0;border:1px solid #a0a0a0"></div>
<span class="m" style="left:452px;top:252px;">Добавить расценку</span>
<span class="m" style="right:1005px;top:252px;">Shift+Ins</span>
<svg style="left:431px;top:250px;" width="16" height="16" viewBox="0 0 16 16"><use href="#hammerb"/></svg>
<span class="m" style="left:452px;top:273px;">Добавить ресурс</span>
<span class="m" style="right:1005px;top:273px;">Ins</span>
<svg style="left:431px;top:271px;" width="16" height="16" viewBox="0 0 16 16"><use href="#bricksb"/></svg>
<span class="m" style="left:452px;top:294px;">Добавить подчиненную строку</span>
<span class="m" style="right:1005px;top:294px;">Alt+Ins</span>
<svg style="left:431px;top:292px;" width="16" height="16" viewBox="0 0 16 16"><use href="#boxb"/></svg>
<span class="m" style="left:452px;top:315px;">Добавить строку-комментарий</span>
<span class="m" style="right:1005px;top:315px;">Alt+R</span>
<svg style="left:431px;top:313px;" width="16" height="16" viewBox="0 0 16 16"><use href="#speechb"/></svg>
<span class="m" style="left:452px;top:336px;">Добавить дополнительную перевозку</span>
<span class="m" style="right:1005px;top:336px;">Shift+Ctrl+Ins</span>
<svg style="left:431px;top:334px;" width="16" height="16" viewBox="0 0 16 16"><use href="#truckr"/></svg>
<span class="m" style="left:452px;top:357px;">Добавить доплату/надбавку</span>
<svg style="left:754px;top:360px" width="4" height="7"><path d="M0 0l4 3.500L0 7z" fill="#000"/></svg>
<span class="m" style="left:452px;top:378px;">Удалить</span>
<span class="m" style="right:1005px;top:378px;">Ctrl+Del</span>
<svg style="left:431px;top:376px;" width="16" height="16" viewBox="0 0 16 16"><use href="#redx"/></svg>
<div style="left:430px;top:399px;width:335px;height:1px;background:#a0a0a0"></div>
<div style="left:430px;top:400px;width:335px;height:1px;background:#fff"></div>
<span class="m" style="left:452px;top:407px;">Поиск по обоснованию</span>
<span class="m" style="right:1005px;top:407px;">Ctrl+Enter</span>
<svg style="left:431px;top:405px;" width="16" height="16" viewBox="0 0 16 16"><use href="#mag"/></svg>
<span class="m" style="left:452px;top:428px;">Поиск по наименованию</span>
<span class="m" style="right:1005px;top:428px;">Shift+Enter</span>
<span class="m" style="left:452px;top:449px;">Выбор по классификатору...</span>
<span class="m" style="right:1005px;top:449px;">Alt+Enter</span>
<span class="m" style="left:452px;top:470px;">Проверка сметы...</span>
<span class="m" style="left:452px;top:491px;">Замена ресурсов...</span>
<span class="m" style="left:452px;top:512px;">Укрупнение расценок...</span>
<div style="left:430px;top:533px;width:335px;height:1px;background:#a0a0a0"></div>
<div style="left:430px;top:534px;width:335px;height:1px;background:#fff"></div>
<span class="m" style="left:452px;top:541px;">Действия</span>
<svg style="left:754px;top:544px" width="4" height="7"><path d="M0 0l4 3.500L0 7z" fill="#000"/></svg>
<div style="left:430px;top:558px;width:336px;height:21px;background:#0078d7"></div>
<span class="m w" style="left:452px;top:562px;">Вид</span>
<svg style="left:754px;top:565px" width="4" height="7"><path d="M0 0l4 3.500L0 7z" fill="#fff"/></svg>
<span class="m" style="left:452px;top:583px;">Закладки</span>
<svg style="left:754px;top:586px" width="4" height="7"><path d="M0 0l4 3.500L0 7z" fill="#000"/></svg>
<span class="m" style="left:452px;top:604px;">Итоги</span>
<svg style="left:754px;top:607px" width="4" height="7"><path d="M0 0l4 3.500L0 7z" fill="#000"/></svg>
<span class="m" style="left:452px;top:625px;">Структура</span>
<svg style="left:754px;top:628px" width="4" height="7"><path d="M0 0l4 3.500L0 7z" fill="#000"/></svg>
<div style="left:430px;top:646px;width:335px;height:1px;background:#a0a0a0"></div>
<div style="left:430px;top:647px;width:335px;height:1px;background:#fff"></div>
<span class="m" style="left:452px;top:654px;">Параметры...</span>
<span class="m" style="right:1005px;top:654px;">F3</span>
<div style="left:430px;top:675px;width:335px;height:1px;background:#a0a0a0"></div>
<div style="left:430px;top:676px;width:335px;height:1px;background:#fff"></div>
<span class="m" style="left:452px;top:683px;">Настроить это меню...</span>
<div style="left:762px;top:555px;width:347px;height:429px;background:#f0f0f0;border:1px solid #a0a0a0"></div>
<span class="m" style="left:787px;top:562px;">Поправки</span>
<span class="m" style="right:664px;top:562px;">Ctrl+F2</span>
<div class="hat" style="left:766px;top:559px;width:18px;height:20px;box-shadow:inset 1px 1px 0 #a8a8a8"></div>
<svg style="left:770px;top:565px;overflow:visible" width="9" height="8" viewBox="0 0 9 8"><path d="M1 3.800L3.600 6.500 8 1.300" fill="none" stroke="#000" stroke-width="2"/></svg>
<span class="m" style="left:787px;top:583px;">Формулы</span>
<span class="m" style="right:664px;top:583px;">Ctrl+F3</span>
<span class="m" style="left:787px;top:604px;">Индексы</span>
<span class="m" style="right:664px;top:604px;">Ctrl+F5</span>
<span class="m" style="left:787px;top:625px;">Переменные</span>
<span class="m" style="right:664px;top:625px;">F2</span>
<span class="m" style="left:787px;top:646px;">Строка формул</span>
<span class="m" style="right:664px;top:646px;">F4</span>
<div class="hat" style="left:766px;top:643px;width:18px;height:20px;box-shadow:inset 1px 1px 0 #a8a8a8"></div>
<svg style="left:770px;top:649px;overflow:visible" width="9" height="8" viewBox="0 0 9 8"><path d="M1 3.800L3.600 6.500 8 1.300" fill="none" stroke="#000" stroke-width="2"/></svg>
<span class="m" style="left:787px;top:667px;">Панель цен</span>
<span class="m" style="right:664px;top:667px;">F5</span>
<span class="m" style="left:787px;top:688px;">Сметные ресурсы</span>
<span class="m" style="right:664px;top:688px;">F6</span>
<div class="hat" style="left:766px;top:685px;width:18px;height:20px;box-shadow:inset 1px 1px 0 #a8a8a8"></div>
<svg style="left:770px;top:691px;overflow:visible" width="9" height="8" viewBox="0 0 9 8"><path d="M1 3.800L3.600 6.500 8 1.300" fill="none" stroke="#000" stroke-width="2"/></svg>
<span class="m" style="left:787px;top:709px;">Нормативные ресурсы</span>
<span class="m" style="right:664px;top:709px;">F7</span>
<span class="m" style="left:787px;top:730px;">Лимитированные затраты</span>
<span class="m" style="right:664px;top:730px;">F9</span>
<span class="m" style="left:787px;top:751px;">Полное наименование</span>
<span class="m" style="left:787px;top:772px;">Информация ячейки</span>
<span class="m" style="left:787px;top:793px;">Структура объекта</span>
<span class="m" style="left:787px;top:814px;">Выделение строк</span>
<span class="m" style="left:787px;top:835px;">Ревизия</span>
<div style="left:765px;top:852px;width:342px;height:21px;background:#0078d7"></div>
<span class="m w" style="left:787px;top:856px;">Конъюнктурный анализ</span>
<div style="left:765px;top:877px;width:341px;height:1px;background:#a0a0a0"></div>
<div style="left:765px;top:878px;width:341px;height:1px;background:#fff"></div>
<span class="m" style="left:787px;top:885px;">Закрепить окна</span>
<div style="left:765px;top:906px;width:341px;height:1px;background:#a0a0a0"></div>
<div style="left:765px;top:907px;width:341px;height:1px;background:#fff"></div>
<span class="m" style="left:787px;top:914px;">Показывать полную единицу измерения</span>
<span class="m" style="right:664px;top:914px;">Shift+Ctrl+E</span>
<div style="left:765px;top:935px;width:341px;height:1px;background:#a0a0a0"></div>
<div style="left:765px;top:936px;width:341px;height:1px;background:#fff"></div>
<span class="m" style="left:787px;top:943px;">Настройка вида таблицы...</span>
<span class="m" style="left:787px;top:964px;">Восстановить вид по умолчанию</span>
<svg style="left:0;top:0" width="1759" height="1120" viewBox="0 0 1759 1120"><path d="M499.500 95L330.500 253.500L423.500 550" fill="none" stroke="#ff0000" stroke-width="3.600" stroke-linejoin="miter"/><path d="M515.500 78.500L494 89L504.500 100.500z" fill="#ff0000"/><path d="M430 571.500L415.500 552L431 547z" fill="#ff0000"/></svg></div></body></html>
